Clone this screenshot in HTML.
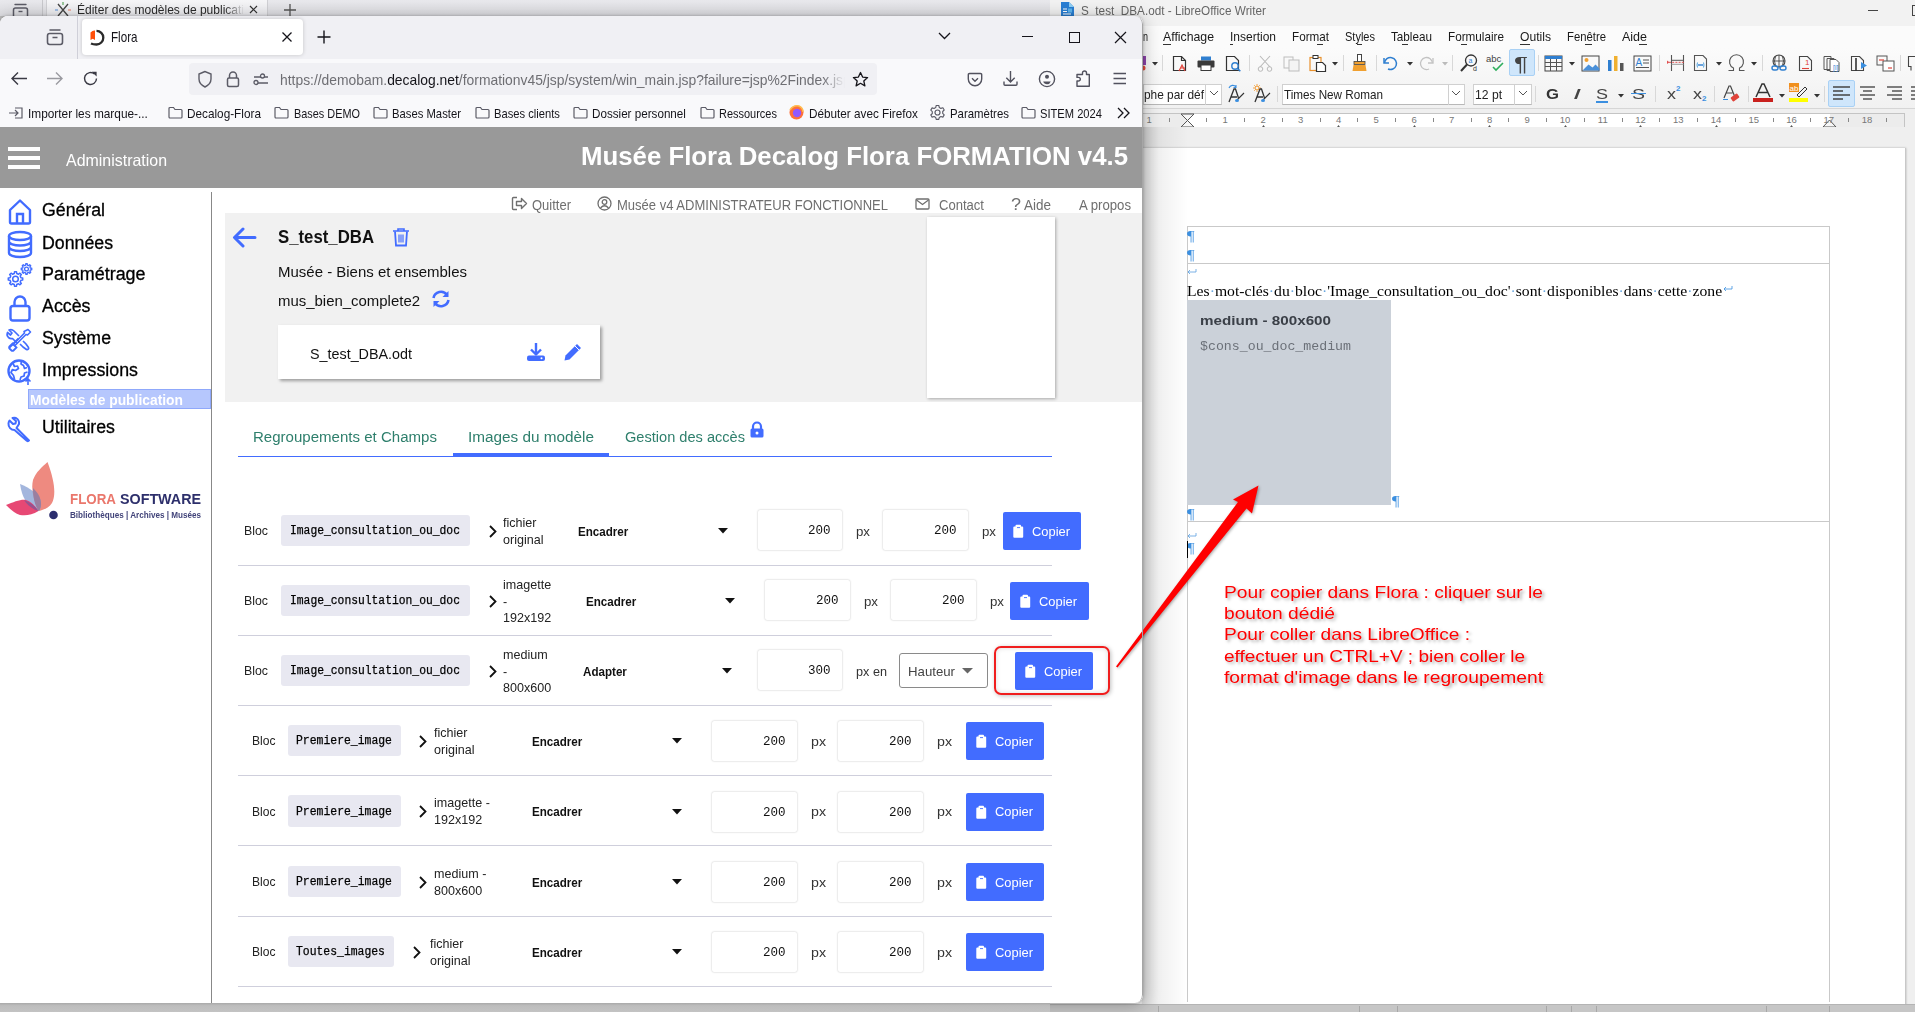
<!DOCTYPE html>
<html><head><meta charset="utf-8"><title>Flora</title>
<style>
*{box-sizing:border-box;margin:0;padding:0}
html,body{width:1915px;height:1012px;overflow:hidden;background:#c0c0c0;font-family:"Liberation Sans",sans-serif}
body{position:relative}
.a{position:absolute}
.t{position:absolute;white-space:nowrap}
svg.a{overflow:visible}
</style></head><body>
<div class="a" style="left:1050.0px;top:0.0px;width:865.0px;height:1012.0px;background:#eeeeee"></div>
<div class="a" style="left:1050.0px;top:0.0px;width:865.0px;height:26.0px;background:#f2f2f2"></div>
<svg class="a" style="left:1060.0px;top:2.0px;" width="14" height="15" viewBox="0 0 14 15" fill="none"><path d="M1 0h8l5 5v10H1z" fill="#2a7fd4"/><path d="M9 0v5h5z" fill="#8fd0f5"/><path d="M3 7h4M3 9.5h4M3 12h8" stroke="#fff" stroke-width="1.2"/><rect x="8" y="6.5" width="4" height="4" fill="#5fb6ee"/></svg>
<div class="t" style="left:1081.0px;top:4.33px;font-size:13.20px;line-height:13.20px;color:#666;font-weight:400;font-family:'Liberation Sans',sans-serif;transform:scaleX(0.8901);transform-origin:0 0;">S_test_DBA.odt - LibreOffice Writer</div>
<div class="a" style="left:1868.0px;top:10.0px;width:10.0px;height:1.0px;background:#444"></div>
<div class="a" style="left:1912.0px;top:5.0px;width:6.0px;height:11.0px;border:1px solid #444"></div>
<div class="a" style="left:1050.0px;top:26.0px;width:865.0px;height:22.0px;background:#fbfbfb"></div>
<div class="t" style="left:1143.0px;top:30.30px;font-size:13.00px;line-height:13.00px;color:#1a1a1a;font-weight:400;font-family:'Liberation Sans',sans-serif;transform:scaleX(0.6916);transform-origin:0 0;">n</div>
<div class="t" style="left:1163.0px;top:30.30px;font-size:13.00px;line-height:13.00px;color:#1a1a1a;font-weight:400;font-family:'Liberation Sans',sans-serif;transform:scaleX(0.9451);transform-origin:0 0;">Affichage</div>
<div class="t" style="left:1230.0px;top:30.30px;font-size:13.00px;line-height:13.00px;color:#1a1a1a;font-weight:400;font-family:'Liberation Sans',sans-serif;transform:scaleX(0.9226);transform-origin:0 0;">Insertion</div>
<div class="t" style="left:1292.0px;top:30.30px;font-size:13.00px;line-height:13.00px;color:#1a1a1a;font-weight:400;font-family:'Liberation Sans',sans-serif;transform:scaleX(0.8988);transform-origin:0 0;">Format</div>
<div class="t" style="left:1345.0px;top:30.30px;font-size:13.00px;line-height:13.00px;color:#1a1a1a;font-weight:400;font-family:'Liberation Sans',sans-serif;transform:scaleX(0.8474);transform-origin:0 0;">Styles</div>
<div class="t" style="left:1391.0px;top:30.30px;font-size:13.00px;line-height:13.00px;color:#1a1a1a;font-weight:400;font-family:'Liberation Sans',sans-serif;transform:scaleX(0.9004);transform-origin:0 0;">Tableau</div>
<div class="t" style="left:1448.0px;top:30.30px;font-size:13.00px;line-height:13.00px;color:#1a1a1a;font-weight:400;font-family:'Liberation Sans',sans-serif;transform:scaleX(0.9015);transform-origin:0 0;">Formulaire</div>
<div class="t" style="left:1520.0px;top:30.30px;font-size:13.00px;line-height:13.00px;color:#1a1a1a;font-weight:400;font-family:'Liberation Sans',sans-serif;transform:scaleX(0.9329);transform-origin:0 0;">Outils</div>
<div class="t" style="left:1567.0px;top:30.30px;font-size:13.00px;line-height:13.00px;color:#1a1a1a;font-weight:400;font-family:'Liberation Sans',sans-serif;transform:scaleX(0.8706);transform-origin:0 0;">Fenêtre</div>
<div class="t" style="left:1622.0px;top:30.30px;font-size:13.00px;line-height:13.00px;color:#1a1a1a;font-weight:400;font-family:'Liberation Sans',sans-serif;transform:scaleX(0.9609);transform-origin:0 0;">Aide</div>
<div class="a" style="left:1163.0px;top:43.5px;width:8.0px;height:1.0px;background:#333"></div>
<div class="a" style="left:1230.0px;top:43.5px;width:3.0px;height:1.0px;background:#333"></div>
<div class="a" style="left:1317.0px;top:43.5px;width:6.0px;height:1.0px;background:#333"></div>
<div class="a" style="left:1357.0px;top:43.5px;width:5.0px;height:1.0px;background:#333"></div>
<div class="a" style="left:1402.0px;top:43.5px;width:6.0px;height:1.0px;background:#333"></div>
<div class="a" style="left:1461.0px;top:43.5px;width:6.0px;height:1.0px;background:#333"></div>
<div class="a" style="left:1520.0px;top:43.5px;width:10.0px;height:1.0px;background:#333"></div>
<div class="a" style="left:1585.0px;top:43.5px;width:7.0px;height:1.0px;background:#333"></div>
<div class="a" style="left:1639.0px;top:43.5px;width:8.0px;height:1.0px;background:#333"></div>
<div class="a" style="left:1050.0px;top:48.0px;width:865.0px;height:61.0px;background:linear-gradient(#fbfbfb,#f1f1f1)"></div>
<div class="a" style="left:1050.0px;top:108.0px;width:865.0px;height:1.0px;background:#d6d6d6"></div>
<svg class="a" style="left:1140.0px;top:55.0px;" width="8" height="16" viewBox="0 0 8 16" fill="none"><rect x="0" y="1" width="6" height="9" fill="#8e44ad"/><circle cx="3" cy="13" r="2.5" fill="#e74c3c"/></svg>
<svg class="a" style="left:1152.0px;top:62.0px;" width="6" height="4" viewBox="0 0 6 4" fill="none"><path d="M0 0h6L3 3.5z" fill="#333"/></svg>
<div class="a" style="left:1162.0px;top:55.0px;width:1.0px;height:16.0px;background:#d8d8d8"></div>
<svg class="a" style="left:1172.0px;top:55.0px;" width="17" height="17" viewBox="0 0 17 17" fill="none"><path d="M1.5 1.5h8l4 4v10h-12z" stroke="#333" stroke-width="1.2"/><path d="M9.5 1.5v4h4" stroke="#333" stroke-width="1.2"/><path d="M7 16l3-6 3 6M8 13h5" stroke="#e0433a" stroke-width="1.2"/></svg>
<svg class="a" style="left:1197.0px;top:56.0px;" width="18" height="15" viewBox="0 0 18 15" fill="none"><rect x="4" y="0.5" width="10" height="4" fill="#2f7fd0"/><rect x="0.5" y="4.5" width="17" height="7" rx="1" fill="#3a3a3a"/><rect x="4" y="9" width="10" height="5.5" fill="#fff" stroke="#3a3a3a"/></svg>
<svg class="a" style="left:1225.0px;top:55.0px;" width="18" height="17" viewBox="0 0 18 17" fill="none"><path d="M1.5 1.5h8l4 4v10h-12z" stroke="#333" stroke-width="1.2"/><circle cx="10" cy="11" r="3.2" stroke="#2f7fd0" stroke-width="1.4"/><path d="M12.3 13.3l3 3" stroke="#2f7fd0" stroke-width="1.6"/></svg>
<div class="a" style="left:1249.0px;top:55.0px;width:1.0px;height:16.0px;background:#d8d8d8"></div>
<svg class="a" style="left:1257.0px;top:55.0px;" width="17" height="17" viewBox="0 0 17 17" fill="none"><path d="M3 1l10 11M13 1L3 12" stroke="#b9b9b9" stroke-width="1.1"/><circle cx="3.5" cy="14" r="2.3" stroke="#b9b9b9"/><circle cx="12.5" cy="14" r="2.3" stroke="#b9b9b9"/></svg>
<svg class="a" style="left:1283.0px;top:56.0px;" width="17" height="16" viewBox="0 0 17 16" fill="none"><rect x="1" y="1" width="9" height="11" stroke="#bdbdbd"/><rect x="6" y="4" width="10" height="11" fill="#f4f4f4" stroke="#bdbdbd"/></svg>
<svg class="a" style="left:1309.0px;top:55.0px;" width="18" height="17" viewBox="0 0 18 17" fill="none"><rect x="1" y="2.5" width="11" height="13" stroke="#e8912d" stroke-width="1.2"/><rect x="4" y="0.5" width="5" height="3" fill="#fff" stroke="#333"/><path d="M7.5 7.5h6l3 3v6h-9z" fill="#fff" stroke="#333" stroke-width="1.2"/></svg>
<svg class="a" style="left:1332.0px;top:62.0px;" width="6" height="4" viewBox="0 0 6 4" fill="none"><path d="M0 0h6L3 3.5z" fill="#333"/></svg>
<div class="a" style="left:1343.0px;top:55.0px;width:1.0px;height:16.0px;background:#d8d8d8"></div>
<svg class="a" style="left:1352.0px;top:54.0px;" width="15" height="18" viewBox="0 0 15 18" fill="none"><rect x="5.5" y="0.5" width="4" height="7" fill="#fff" stroke="#444"/><rect x="2" y="7.5" width="11" height="3" fill="#f0a030" stroke="#444" stroke-width="0.8"/><path d="M1.5 11h12l1 6H0.5z" fill="#f0a030"/></svg>
<div class="a" style="left:1376.0px;top:55.0px;width:1.0px;height:16.0px;background:#d8d8d8"></div>
<svg class="a" style="left:1382.0px;top:55.0px;" width="17" height="16" viewBox="0 0 17 16" fill="none"><path d="M2 3v5h5" stroke="#2f7fd0" stroke-width="1.5"/><path d="M2.5 8A6 6 0 1 1 6 14" stroke="#2f7fd0" stroke-width="1.5"/></svg>
<svg class="a" style="left:1407.0px;top:62.0px;" width="6" height="4" viewBox="0 0 6 4" fill="none"><path d="M0 0h6L3 3.5z" fill="#333"/></svg>
<svg class="a" style="left:1418.0px;top:55.0px;" width="17" height="16" viewBox="0 0 17 16" fill="none"><path d="M15 3v5h-5" stroke="#c3c3c3" stroke-width="1.3"/><path d="M14.5 8A6 6 0 1 0 11 14" stroke="#c3c3c3" stroke-width="1.3"/></svg>
<svg class="a" style="left:1442.0px;top:62.0px;" width="6" height="4" viewBox="0 0 6 4" fill="none"><path d="M0 0h6L3 3.5z" fill="#bbb"/></svg>
<div class="a" style="left:1452.0px;top:55.0px;width:1.0px;height:16.0px;background:#d8d8d8"></div>
<svg class="a" style="left:1460.0px;top:54.0px;" width="19" height="18" viewBox="0 0 19 18" fill="none"><circle cx="11" cy="6.5" r="5.5" stroke="#333" stroke-width="1.3"/><path d="M7 10.5L1 17" stroke="#333" stroke-width="2"/><text x="8.5" y="9" font-size="7" fill="#2f7fd0" font-family="Liberation Sans">a</text><text x="13" y="17" font-size="7" fill="#333" font-family="Liberation Sans">d</text></svg>
<svg class="a" style="left:1486.0px;top:54.0px;" width="20" height="18" viewBox="0 0 20 18" fill="none"><text x="0" y="8" font-size="9.5" fill="#444" font-family="Liberation Sans">abc</text><path d="M7 13l3 3 7-7" stroke="#2fae5e" stroke-width="1.6"/></svg>
<div class="a" style="left:1509.0px;top:49.0px;width:26.0px;height:27.0px;background:#cfe6fb;border:1px solid #a9d1f5;border-radius:2px"></div>
<div class="t" style="left:1514.0px;top:53.22px;font-size:21.00px;line-height:21.00px;color:#444;font-weight:400;font-family:'Liberation Sans',sans-serif;transform:scaleX(1.2410);transform-origin:0 0;">¶</div>
<div class="a" style="left:1538.0px;top:55.0px;width:1.0px;height:16.0px;background:#d8d8d8"></div>
<svg class="a" style="left:1544.0px;top:55.0px;" width="19" height="17" viewBox="0 0 19 17" fill="none"><rect x="1" y="1" width="17" height="15" stroke="#444"/><rect x="1" y="1" width="17" height="3" fill="#2f7fd0"/><path d="M1 7.5h17M1 11.5h17M6.5 4v12M12.5 4v12" stroke="#555"/></svg>
<svg class="a" style="left:1569.0px;top:62.0px;" width="6" height="4" viewBox="0 0 6 4" fill="none"><path d="M0 0h6L3 3.5z" fill="#333"/></svg>
<svg class="a" style="left:1581.0px;top:55.0px;" width="19" height="17" viewBox="0 0 19 17" fill="none"><rect x="1" y="1" width="17" height="15" stroke="#444"/><circle cx="5.5" cy="5" r="2" fill="#f0a030"/><path d="M1.5 15.5l6-6 4 3 3-3 4 4v2z" fill="#4a90d9"/></svg>
<svg class="a" style="left:1607.0px;top:55.0px;" width="18" height="17" viewBox="0 0 18 17" fill="none"><rect x="1" y="5" width="3.5" height="11" fill="#2f7fd0"/><rect x="7" y="1" width="3.5" height="15" fill="#f0b030"/><rect x="13" y="8" width="3.5" height="8" fill="#555"/></svg>
<svg class="a" style="left:1633.0px;top:55.0px;" width="19" height="17" viewBox="0 0 19 17" fill="none"><rect x="1" y="1" width="17" height="15" stroke="#444"/><text x="2.5" y="11" font-size="10" fill="#2f7fd0" font-family="Liberation Sans">A</text><path d="M10 5h6M10 8h6M3 12.5h13" stroke="#555"/></svg>
<div class="a" style="left:1659.0px;top:55.0px;width:1.0px;height:16.0px;background:#d8d8d8"></div>
<svg class="a" style="left:1666.0px;top:54.0px;" width="20" height="18" viewBox="0 0 20 18" fill="none"><path d="M5.5 1v16M17.5 1v16" stroke="#555" stroke-width="1.1"/><path d="M5.5 6.3h12" stroke="#555" stroke-width="1"/><path d="M5.5 10.3h12" stroke="#999" stroke-width="1"/><path d="M3 8.3h15" stroke="#e05050" stroke-width="1" stroke-dasharray="2 1.2"/><path d="M1 6.5l2.5 1.8L1 10z" fill="#e05050"/></svg>
<svg class="a" style="left:1693.0px;top:54.0px;" width="16" height="18" viewBox="0 0 16 18" fill="none"><path d="M1.5 1.5h8.5l3.5 3.5v11.5h-12z" stroke="#555" stroke-width="1.1"/><path d="M4.5 8.5q-1 2.5 0 5M10.5 8.5q1 2.5 0 5" stroke="#55a5e0" stroke-width="1"/><path d="M5 11h5" stroke="#2f7fd0" stroke-width="1.4"/></svg>
<svg class="a" style="left:1716.0px;top:62.0px;" width="6" height="4" viewBox="0 0 6 4" fill="none"><path d="M0 0h6L3 3.5z" fill="#333"/></svg>
<svg class="a" style="left:1727.0px;top:54.0px;" width="19" height="18" viewBox="0 0 19 18" fill="none"><path d="M1.5 16.5h5v-2.5A7 7 0 1 1 12.5 14v2.5h5" stroke="#555" stroke-width="1.1"/></svg>
<svg class="a" style="left:1751.0px;top:62.0px;" width="6" height="4" viewBox="0 0 6 4" fill="none"><path d="M0 0h6L3 3.5z" fill="#333"/></svg>
<div class="a" style="left:1762.0px;top:55.0px;width:1.0px;height:16.0px;background:#d8d8d8"></div>
<svg class="a" style="left:1770.0px;top:54.0px;" width="19" height="18" viewBox="0 0 19 18" fill="none"><circle cx="9" cy="7" r="6" stroke="#444" stroke-width="1.1"/><path d="M3 7h12M9 1v12M5.5 2.5q-2 4.5 0 9M12.5 2.5q2 4.5 0 9" stroke="#444" stroke-width="0.9"/><rect x="2" y="12" width="6" height="4" rx="2" stroke="#2f7fd0" stroke-width="1.4"/><rect x="10" y="12" width="6" height="4" rx="2" stroke="#2f7fd0" stroke-width="1.4"/></svg>
<svg class="a" style="left:1798.0px;top:55.0px;" width="15" height="17" viewBox="0 0 15 17" fill="none"><path d="M1.5 1.5h8l4 4v10h-12z" stroke="#444" stroke-width="1.1"/><path d="M4 13.5h7" stroke="#e0433a" stroke-width="1.1"/><text x="7" y="10" font-size="8" fill="#e0433a" font-family="Liberation Sans">1</text></svg>
<svg class="a" style="left:1823.0px;top:55.0px;" width="18" height="17" viewBox="0 0 18 17" fill="none"><path d="M1 1.5h7v13H1zM4 3.5h7v12H4z" stroke="#555"/><path d="M7 4.5h6l3 3v9H7z" fill="#fff" stroke="#555"/><text x="10" y="15" font-size="7" fill="#2f7fd0" font-family="Liberation Sans">[i]</text></svg>
<svg class="a" style="left:1850.0px;top:55.0px;" width="19" height="17" viewBox="0 0 19 17" fill="none"><path d="M1.5 1.5h8l4 4v10h-12z" stroke="#444" stroke-width="1.1"/><path d="M6 3v13" stroke="#333" stroke-width="1.6"/><path d="M11 7v7l6-3.5z" fill="#3b8fe0"/></svg>
<svg class="a" style="left:1876.0px;top:55.0px;" width="19" height="17" viewBox="0 0 19 17" fill="none"><rect x="1" y="1" width="10" height="9" stroke="#555"/><rect x="7" y="6" width="11" height="10" fill="#fff" stroke="#555"/><path d="M3 5h5" stroke="#e0433a" stroke-width="1.2"/><path d="M12 13h4" stroke="#e0433a" stroke-width="1.2"/></svg>
<div class="a" style="left:1900.0px;top:55.0px;width:1.0px;height:16.0px;background:#d8d8d8"></div>
<svg class="a" style="left:1907.0px;top:55.0px;" width="8" height="17" viewBox="0 0 8 17" fill="none"><path d="M8 1.5H1.5v10H4v4" stroke="#444" stroke-width="1.1"/></svg>
<div class="a" style="left:1143.0px;top:84.0px;width:79.0px;height:21.0px;background:#fff;border:1px solid #d0d0d0;border-bottom-color:#b8b8b8"></div>
<div class="a" style="left:1205.0px;top:84.0px;width:1.0px;height:21.0px;background:#d0d0d0"></div>
<div class="t" style="left:1144.0px;top:87.50px;font-size:13.00px;line-height:13.00px;color:#222;font-weight:400;font-family:'Liberation Sans',sans-serif;transform:scaleX(0.9123);transform-origin:0 0;">phe par déf</div>
<svg class="a" style="left:1209.0px;top:90.0px;" width="10" height="6" viewBox="0 0 10 6" fill="none"><path d="M1 1l4 4 4-4" stroke="#555" stroke-width="1"/></svg>
<svg class="a" style="left:1226.0px;top:84.0px;" width="21" height="20" viewBox="0 0 21 20" fill="none"><path d="M3 4a4 4 0 0 1 7-1M10 1v2.5H7.5" stroke="#3b8fe0" stroke-width="1.1"/><path d="M3 18l5-13h1.5l3 9M5 13h6" stroke="#333" stroke-width="1.3"/><path d="M11 16l7-7" stroke="#333" stroke-width="1.1"/><ellipse cx="11" cy="16.5" rx="2" ry="1.5" fill="#3b8fe0"/></svg>
<svg class="a" style="left:1252.0px;top:84.0px;" width="21" height="20" viewBox="0 0 21 20" fill="none"><circle cx="5" cy="4" r="2" stroke="#f0901e" stroke-width="1"/><path d="M5 0v1.3M5 6.7V8M1 4h1.3M7.7 4H9M2.2 1.2l1 1M6.8 5.8l1 1M2.2 6.8l1-1M6.8 2.2l1-1" stroke="#f0901e" stroke-width="0.8"/><path d="M3 18l5-13h1.5l3 9M5 13h6" stroke="#333" stroke-width="1.3"/><path d="M11 16l7-7" stroke="#333" stroke-width="1.1"/><ellipse cx="11" cy="16.5" rx="2" ry="1.5" fill="#3b8fe0"/></svg>
<div class="a" style="left:1277.0px;top:86.0px;width:1.0px;height:16.0px;background:#d8d8d8"></div>
<div class="a" style="left:1282.0px;top:84.0px;width:183.0px;height:21.0px;background:#fff;border:1px solid #d0d0d0;border-bottom-color:#b8b8b8"></div>
<div class="a" style="left:1448.0px;top:84.0px;width:1.0px;height:21.0px;background:#d0d0d0"></div>
<div class="t" style="left:1284.0px;top:87.50px;font-size:13.00px;line-height:13.00px;color:#222;font-weight:400;font-family:'Liberation Sans',sans-serif;transform:scaleX(0.8997);transform-origin:0 0;">Times New Roman</div>
<svg class="a" style="left:1451.0px;top:90.0px;" width="10" height="6" viewBox="0 0 10 6" fill="none"><path d="M1 1l4 4 4-4" stroke="#555" stroke-width="1"/></svg>
<div class="a" style="left:1473.0px;top:84.0px;width:59.0px;height:21.0px;background:#fff;border:1px solid #d0d0d0;border-bottom-color:#b8b8b8"></div>
<div class="a" style="left:1514.0px;top:84.0px;width:1.0px;height:21.0px;background:#d0d0d0"></div>
<div class="t" style="left:1475.0px;top:87.50px;font-size:13.00px;line-height:13.00px;color:#222;font-weight:400;font-family:'Liberation Sans',sans-serif;transform:scaleX(0.9339);transform-origin:0 0;">12 pt</div>
<svg class="a" style="left:1518.0px;top:90.0px;" width="10" height="6" viewBox="0 0 10 6" fill="none"><path d="M1 1l4 4 4-4" stroke="#555" stroke-width="1"/></svg>
<div class="a" style="left:1535.0px;top:86.0px;width:1.0px;height:16.0px;background:#d8d8d8"></div>
<div class="t" style="left:1546.0px;top:86.30px;font-size:15.00px;line-height:15.00px;color:#333;font-weight:700;font-family:'Liberation Sans',sans-serif;transform:scaleX(1.1142);transform-origin:0 0;">G</div>
<div class="t" style="left:1573.0px;top:86.30px;font-size:15.00px;line-height:15.00px;color:#444;font-weight:400;font-family:'Liberation Sans',sans-serif;transform:scaleX(1.9198);transform-origin:0 0;font-style:italic;">I</div>
<div class="t" style="left:1596.0px;top:86.30px;font-size:15.00px;line-height:15.00px;color:#444;font-weight:400;font-family:'Liberation Sans',sans-serif;transform:scaleX(1.1993);transform-origin:0 0;">S</div>
<div class="a" style="left:1596.0px;top:101.0px;width:12.0px;height:1.5px;background:#3b8fe0"></div>
<svg class="a" style="left:1618.0px;top:94.0px;" width="6" height="4" viewBox="0 0 6 4" fill="none"><path d="M0 0h6L3 3.5z" fill="#333"/></svg>
<div class="t" style="left:1632.0px;top:86.30px;font-size:15.00px;line-height:15.00px;color:#444;font-weight:400;font-family:'Liberation Sans',sans-serif;transform:scaleX(1.2993);transform-origin:0 0;">S</div>
<div class="a" style="left:1631.0px;top:93.0px;width:15.0px;height:1.2px;background:#3b8fe0"></div>
<div class="a" style="left:1655.0px;top:86.0px;width:1.0px;height:16.0px;background:#d8d8d8"></div>
<div class="t" style="left:1667.0px;top:87.15px;font-size:14.00px;line-height:14.00px;color:#444;font-weight:400;font-family:'Liberation Sans',sans-serif;transform:scaleX(1.2857);transform-origin:0 0;">x</div>
<div class="t" style="left:1676.0px;top:85.23px;font-size:8.00px;line-height:8.00px;color:#3b8fe0;font-weight:700;font-family:'Liberation Sans',sans-serif;">2</div>
<div class="t" style="left:1693.0px;top:87.15px;font-size:14.00px;line-height:14.00px;color:#444;font-weight:400;font-family:'Liberation Sans',sans-serif;transform:scaleX(1.2857);transform-origin:0 0;">x</div>
<div class="t" style="left:1702.0px;top:95.23px;font-size:8.00px;line-height:8.00px;color:#3b8fe0;font-weight:700;font-family:'Liberation Sans',sans-serif;">2</div>
<div class="a" style="left:1714.0px;top:86.0px;width:1.0px;height:16.0px;background:#d8d8d8"></div>
<svg class="a" style="left:1723.0px;top:84.0px;" width="17" height="18" viewBox="0 0 17 18" fill="none"><path d="M1 14l5-12h1.5l4 10M3.5 9h6" stroke="#444" stroke-width="1.2"/><path d="M0 15.5h5" stroke="#3b8fe0"/><rect x="8" y="11" width="8" height="5" rx="1" transform="rotate(-35 12 13.5)" fill="#e0433a"/></svg>
<div class="a" style="left:1748.0px;top:86.0px;width:1.0px;height:16.0px;background:#d8d8d8"></div>
<svg class="a" style="left:1753.0px;top:83.0px;" width="20" height="20" viewBox="0 0 20 20" fill="none"><path d="M3 14L9 1h2l6 13M5.5 9.5h9" stroke="#333" stroke-width="1.5"/><rect x="0" y="15" width="20" height="4" fill="#c9211e"/></svg>
<svg class="a" style="left:1779.0px;top:94.0px;" width="6" height="4" viewBox="0 0 6 4" fill="none"><path d="M0 0h6L3 3.5z" fill="#333"/></svg>
<svg class="a" style="left:1789.0px;top:83.0px;" width="20" height="20" viewBox="0 0 20 20" fill="none"><rect x="0" y="0" width="10" height="9" fill="#f0901e"/><text x="0.5" y="8" font-size="8" fill="#fff" font-family="Liberation Sans">ab</text><path d="M8 12l8-8 2 2-8 8z" stroke="#333" stroke-width="1"/><rect x="0" y="15" width="19" height="4" fill="#ffff00"/></svg>
<svg class="a" style="left:1814.0px;top:94.0px;" width="6" height="4" viewBox="0 0 6 4" fill="none"><path d="M0 0h6L3 3.5z" fill="#333"/></svg>
<div class="a" style="left:1824.0px;top:86.0px;width:1.0px;height:16.0px;background:#d8d8d8"></div>
<div class="a" style="left:1828.0px;top:80.0px;width:27.0px;height:27.0px;background:#cfe6fb;border:1px solid #a9d1f5;border-radius:2px"></div>
<svg class="a" style="left:1832.0px;top:86.0px;" width="19" height="15" viewBox="0 0 19 15" fill="none"><path d="M1 1h17M1 5h10M1 9h17M1 13h10" stroke="#444" stroke-width="1.4"/></svg>
<svg class="a" style="left:1859.0px;top:86.0px;" width="17" height="15" viewBox="0 0 17 15" fill="none"><path d="M1 1h15M4 5h9M1 9h15M4 13h9" stroke="#555" stroke-width="1.4"/></svg>
<svg class="a" style="left:1886.0px;top:86.0px;" width="17" height="15" viewBox="0 0 17 15" fill="none"><path d="M1 1h15M6 5h10M1 9h15M6 13h10" stroke="#555" stroke-width="1.4"/></svg>
<svg class="a" style="left:1911.0px;top:86.0px;" width="4" height="15" viewBox="0 0 4 15" fill="none"><path d="M0 1h4M0 5h4M0 9h4M0 13h4" stroke="#555" stroke-width="1.4"/></svg>
<div class="a" style="left:1050.0px;top:109.0px;width:865.0px;height:18.0px;background:#efefef"></div>
<div class="a" style="left:1143.0px;top:113.0px;width:762.0px;height:15.0px;background:#fff;border:1px solid #c4c4c4"></div>
<div class="a" style="left:1143.0px;top:113.0px;width:44.0px;height:15.0px;background:#ececec;border-top:1px solid #c4c4c4;border-bottom:1px solid #c4c4c4"></div>
<div class="a" style="left:1830.0px;top:113.0px;width:75.0px;height:15.0px;background:#ececec;border:1px solid #c4c4c4;border-left:none"></div>
<div class="t" style="left:1222.6px;top:115.46px;font-size:9.50px;line-height:9.50px;color:#777;font-weight:400;font-family:'Liberation Sans',sans-serif;">1</div>
<div class="t" style="left:1260.4px;top:115.46px;font-size:9.50px;line-height:9.50px;color:#777;font-weight:400;font-family:'Liberation Sans',sans-serif;">2</div>
<div class="t" style="left:1298.1px;top:115.46px;font-size:9.50px;line-height:9.50px;color:#777;font-weight:400;font-family:'Liberation Sans',sans-serif;">3</div>
<div class="t" style="left:1335.9px;top:115.46px;font-size:9.50px;line-height:9.50px;color:#777;font-weight:400;font-family:'Liberation Sans',sans-serif;">4</div>
<div class="t" style="left:1373.6px;top:115.46px;font-size:9.50px;line-height:9.50px;color:#777;font-weight:400;font-family:'Liberation Sans',sans-serif;">5</div>
<div class="t" style="left:1411.4px;top:115.46px;font-size:9.50px;line-height:9.50px;color:#777;font-weight:400;font-family:'Liberation Sans',sans-serif;">6</div>
<div class="t" style="left:1449.1px;top:115.46px;font-size:9.50px;line-height:9.50px;color:#777;font-weight:400;font-family:'Liberation Sans',sans-serif;">7</div>
<div class="t" style="left:1486.9px;top:115.46px;font-size:9.50px;line-height:9.50px;color:#777;font-weight:400;font-family:'Liberation Sans',sans-serif;">8</div>
<div class="t" style="left:1524.6px;top:115.46px;font-size:9.50px;line-height:9.50px;color:#777;font-weight:400;font-family:'Liberation Sans',sans-serif;">9</div>
<div class="t" style="left:1559.7px;top:115.46px;font-size:9.50px;line-height:9.50px;color:#777;font-weight:400;font-family:'Liberation Sans',sans-serif;">10</div>
<div class="t" style="left:1597.8px;top:115.46px;font-size:9.50px;line-height:9.50px;color:#777;font-weight:400;font-family:'Liberation Sans',sans-serif;">11</div>
<div class="t" style="left:1635.2px;top:115.46px;font-size:9.50px;line-height:9.50px;color:#777;font-weight:400;font-family:'Liberation Sans',sans-serif;">12</div>
<div class="t" style="left:1673.0px;top:115.46px;font-size:9.50px;line-height:9.50px;color:#777;font-weight:400;font-family:'Liberation Sans',sans-serif;">13</div>
<div class="t" style="left:1710.7px;top:115.46px;font-size:9.50px;line-height:9.50px;color:#777;font-weight:400;font-family:'Liberation Sans',sans-serif;">14</div>
<div class="t" style="left:1748.5px;top:115.46px;font-size:9.50px;line-height:9.50px;color:#777;font-weight:400;font-family:'Liberation Sans',sans-serif;">15</div>
<div class="t" style="left:1786.2px;top:115.46px;font-size:9.50px;line-height:9.50px;color:#777;font-weight:400;font-family:'Liberation Sans',sans-serif;">16</div>
<div class="t" style="left:1861.7px;top:115.46px;font-size:9.50px;line-height:9.50px;color:#777;font-weight:400;font-family:'Liberation Sans',sans-serif;">18</div>
<div class="t" style="left:1146.5px;top:115.46px;font-size:9.50px;line-height:9.50px;color:#777;font-weight:400;font-family:'Liberation Sans',sans-serif;">1</div>
<div class="a" style="left:1168.6px;top:118.0px;width:1.0px;height:4.0px;background:#888"></div>
<div class="a" style="left:1206.4px;top:118.0px;width:1.0px;height:4.0px;background:#888"></div>
<div class="a" style="left:1244.1px;top:118.0px;width:1.0px;height:4.0px;background:#888"></div>
<div class="a" style="left:1281.9px;top:118.0px;width:1.0px;height:4.0px;background:#888"></div>
<div class="a" style="left:1319.6px;top:118.0px;width:1.0px;height:4.0px;background:#888"></div>
<div class="a" style="left:1357.4px;top:118.0px;width:1.0px;height:4.0px;background:#888"></div>
<div class="a" style="left:1395.1px;top:118.0px;width:1.0px;height:4.0px;background:#888"></div>
<div class="a" style="left:1432.9px;top:118.0px;width:1.0px;height:4.0px;background:#888"></div>
<div class="a" style="left:1470.6px;top:118.0px;width:1.0px;height:4.0px;background:#888"></div>
<div class="a" style="left:1508.4px;top:118.0px;width:1.0px;height:4.0px;background:#888"></div>
<div class="a" style="left:1546.1px;top:118.0px;width:1.0px;height:4.0px;background:#888"></div>
<div class="a" style="left:1583.9px;top:118.0px;width:1.0px;height:4.0px;background:#888"></div>
<div class="a" style="left:1621.6px;top:118.0px;width:1.0px;height:4.0px;background:#888"></div>
<div class="a" style="left:1659.4px;top:118.0px;width:1.0px;height:4.0px;background:#888"></div>
<div class="a" style="left:1697.1px;top:118.0px;width:1.0px;height:4.0px;background:#888"></div>
<div class="a" style="left:1734.9px;top:118.0px;width:1.0px;height:4.0px;background:#888"></div>
<div class="a" style="left:1772.6px;top:118.0px;width:1.0px;height:4.0px;background:#888"></div>
<div class="a" style="left:1810.4px;top:118.0px;width:1.0px;height:4.0px;background:#888"></div>
<div class="a" style="left:1848.1px;top:118.0px;width:1.0px;height:4.0px;background:#888"></div>
<div class="a" style="left:1885.9px;top:118.0px;width:1.0px;height:4.0px;background:#888"></div>
<svg class="a" style="left:1260.5px;top:124.5px;" width="5" height="3.5" viewBox="0 0 5 3.5" fill="none"><path d="M0 3.5L2.5 0 5 3.5z" fill="#555"/></svg>
<svg class="a" style="left:1336.0px;top:124.5px;" width="5" height="3.5" viewBox="0 0 5 3.5" fill="none"><path d="M0 3.5L2.5 0 5 3.5z" fill="#555"/></svg>
<svg class="a" style="left:1411.5px;top:124.5px;" width="5" height="3.5" viewBox="0 0 5 3.5" fill="none"><path d="M0 3.5L2.5 0 5 3.5z" fill="#555"/></svg>
<svg class="a" style="left:1487.0px;top:124.5px;" width="5" height="3.5" viewBox="0 0 5 3.5" fill="none"><path d="M0 3.5L2.5 0 5 3.5z" fill="#555"/></svg>
<svg class="a" style="left:1562.5px;top:124.5px;" width="5" height="3.5" viewBox="0 0 5 3.5" fill="none"><path d="M0 3.5L2.5 0 5 3.5z" fill="#555"/></svg>
<svg class="a" style="left:1638.0px;top:124.5px;" width="5" height="3.5" viewBox="0 0 5 3.5" fill="none"><path d="M0 3.5L2.5 0 5 3.5z" fill="#555"/></svg>
<svg class="a" style="left:1713.5px;top:124.5px;" width="5" height="3.5" viewBox="0 0 5 3.5" fill="none"><path d="M0 3.5L2.5 0 5 3.5z" fill="#555"/></svg>
<svg class="a" style="left:1789.0px;top:124.5px;" width="5" height="3.5" viewBox="0 0 5 3.5" fill="none"><path d="M0 3.5L2.5 0 5 3.5z" fill="#555"/></svg>
<svg class="a" style="left:1180.0px;top:113.0px;" width="15" height="15" viewBox="0 0 15 15" fill="none"><path d="M1 1h13L7.5 7.5zM1 14h13L7.5 7.5z" fill="#f6f6f6" stroke="#555"/></svg>
<svg class="a" style="left:1822.0px;top:114.0px;" width="15" height="14" viewBox="0 0 15 14" fill="none"><path d="M7.5 6L1 13h13z" fill="#f6f6f6" stroke="#555"/></svg>
<div class="t" style="left:1823.5px;top:115.46px;font-size:9.50px;line-height:9.50px;color:#777;font-weight:400;font-family:'Liberation Sans',sans-serif;">17</div>
<div class="a" style="left:1050.0px;top:127.0px;width:865.0px;height:876.0px;background:#efefef"></div>
<div class="a" style="left:1143.0px;top:148.0px;width:763.0px;height:860.0px;background:#fff;box-shadow:0 0 2px #aaa"></div>
<div class="a" style="left:1905.0px;top:148.0px;width:1.0px;height:860.0px;background:#c8c8c8"></div>
<div class="a" style="left:1187.0px;top:226.0px;width:643.0px;height:38.0px;border:1px solid #c9c9c9;border-bottom:none"></div>
<div class="a" style="left:1187.0px;top:263.0px;width:643.0px;height:1.0px;background:#c9c9c9"></div>
<div class="a" style="left:1187.0px;top:264.0px;width:1.0px;height:258.0px;background:#c9c9c9"></div>
<div class="a" style="left:1829.0px;top:264.0px;width:1.0px;height:258.0px;background:#c9c9c9"></div>
<div class="a" style="left:1187.0px;top:521.0px;width:643.0px;height:1.0px;background:#c9c9c9"></div>
<div class="a" style="left:1187.0px;top:522.0px;width:1.0px;height:480.0px;background:#c9c9c9"></div>
<div class="a" style="left:1829.0px;top:522.0px;width:1.0px;height:480.0px;background:#c9c9c9"></div>
<div class="t" style="left:1186.5px;top:228.02px;font-size:15.50px;line-height:15.50px;color:#3b8fe0;font-weight:400;font-family:'Liberation Serif',serif;transform:scaleX(1.0679);transform-origin:0 0;">¶</div>
<div class="t" style="left:1186.5px;top:247.02px;font-size:15.50px;line-height:15.50px;color:#3b8fe0;font-weight:400;font-family:'Liberation Serif',serif;transform:scaleX(1.0679);transform-origin:0 0;">¶</div>
<div class="t" style="left:1186.5px;top:506.02px;font-size:15.50px;line-height:15.50px;color:#3b8fe0;font-weight:400;font-family:'Liberation Serif',serif;transform:scaleX(1.0679);transform-origin:0 0;">¶</div>
<div class="t" style="left:1186.5px;top:540.02px;font-size:15.50px;line-height:15.50px;color:#3b8fe0;font-weight:400;font-family:'Liberation Serif',serif;transform:scaleX(1.0679);transform-origin:0 0;">¶</div>
<svg class="a" style="left:1187.0px;top:269.0px;" width="10" height="6" viewBox="0 0 10 6" fill="none"><path d="M9 0v3H1M3 1L1 3l2 2" stroke="#5aa0e0" stroke-width="0.8"/></svg>
<svg class="a" style="left:1187.0px;top:533.0px;" width="10" height="6" viewBox="0 0 10 6" fill="none"><path d="M9 0v3H1M3 1L1 3l2 2" stroke="#5aa0e0" stroke-width="0.8"/></svg>
<div class="t" style="left:1187px;top:283.02px;font-size:15.5px;line-height:15.5px;color:#000;font-family:'Liberation Serif',serif;transform:scaleX(1.0114);transform-origin:0 0">Les<span style="color:#6aa8e0">·</span>mot-clés<span style="color:#6aa8e0">·</span>du<span style="color:#6aa8e0">·</span>bloc<span style="color:#6aa8e0">·</span>&#x27;Image_consultation_ou_doc&#x27;<span style="color:#6aa8e0">·</span>sont<span style="color:#6aa8e0">·</span>disponibles<span style="color:#6aa8e0">·</span>dans<span style="color:#6aa8e0">·</span>cette<span style="color:#6aa8e0">·</span>zone</div>
<svg class="a" style="left:1723.0px;top:286.0px;" width="10" height="6" viewBox="0 0 10 6" fill="none"><path d="M9 0v3H1M3 1L1 3l2 2" stroke="#3b8fe0" stroke-width="0.8"/></svg>
<div class="a" style="left:1187.0px;top:300.0px;width:204.0px;height:205.0px;background:#cbd1d9"></div>
<div class="t" style="left:1200.0px;top:313.57px;font-size:13.50px;line-height:13.50px;color:#3a3f47;font-weight:700;font-family:'Liberation Sans',sans-serif;transform:scaleX(1.1264);transform-origin:0 0;">medium - 800x600</div>
<div class="t" style="left:1200.0px;top:340.81px;font-size:12.00px;line-height:12.00px;color:#6b7078;font-weight:400;font-family:'Liberation Mono',monospace;transform:scaleX(1.1035);transform-origin:0 0;">$cons_ou_doc_medium</div>
<div class="t" style="left:1391.5px;top:493.02px;font-size:15.50px;line-height:15.50px;color:#3b8fe0;font-weight:400;font-family:'Liberation Serif',serif;transform:scaleX(1.0679);transform-origin:0 0;">¶</div>
<div class="a" style="left:1187.0px;top:541.0px;width:1.0px;height:17.0px;background:#000"></div>
<div class="t" style="left:1224.0px;top:583.61px;font-size:17.00px;line-height:17.00px;color:#ff0000;font-weight:400;font-family:'Liberation Sans',sans-serif;transform:scaleX(1.1292);transform-origin:0 0;text-shadow:2px 2px 3px rgba(0,0,0,.35);">Pour copier dans Flora : cliquer sur le</div>
<div class="t" style="left:1224.0px;top:604.61px;font-size:17.00px;line-height:17.00px;color:#ff0000;font-weight:400;font-family:'Liberation Sans',sans-serif;transform:scaleX(1.1291);transform-origin:0 0;text-shadow:2px 2px 3px rgba(0,0,0,.35);">bouton dédié</div>
<div class="t" style="left:1224.0px;top:625.61px;font-size:17.00px;line-height:17.00px;color:#ff0000;font-weight:400;font-family:'Liberation Sans',sans-serif;transform:scaleX(1.1238);transform-origin:0 0;text-shadow:2px 2px 3px rgba(0,0,0,.35);">Pour coller dans LibreOffice :</div>
<div class="t" style="left:1224.0px;top:647.61px;font-size:17.00px;line-height:17.00px;color:#ff0000;font-weight:400;font-family:'Liberation Sans',sans-serif;transform:scaleX(1.1171);transform-origin:0 0;text-shadow:2px 2px 3px rgba(0,0,0,.35);">effectuer un CTRL+V ; bien coller le</div>
<div class="t" style="left:1224.0px;top:668.61px;font-size:17.00px;line-height:17.00px;color:#ff0000;font-weight:400;font-family:'Liberation Sans',sans-serif;transform:scaleX(1.1313);transform-origin:0 0;text-shadow:2px 2px 3px rgba(0,0,0,.35);">format d&#x27;image dans le regroupement</div>
<div class="a" style="left:1050.0px;top:1004.0px;width:865.0px;height:8.0px;background:#c6c6c6;border-top:1px solid #b4b4b4"></div>
<div class="a" style="left:1158.0px;top:1006.0px;width:1.0px;height:6.0px;background:#a8a8a8"></div>
<div class="a" style="left:1359.0px;top:1006.0px;width:1.0px;height:6.0px;background:#a8a8a8"></div>
<div class="a" style="left:1397.0px;top:1006.0px;width:1.0px;height:6.0px;background:#a8a8a8"></div>
<div class="a" style="left:1546.0px;top:1006.0px;width:1.0px;height:6.0px;background:#a8a8a8"></div>
<div class="a" style="left:1571.0px;top:1006.0px;width:1.0px;height:6.0px;background:#a8a8a8"></div>
<div class="a" style="left:1596.0px;top:1006.0px;width:1.0px;height:6.0px;background:#a8a8a8"></div>
<div class="a" style="left:1766.0px;top:1006.0px;width:1.0px;height:6.0px;background:#a8a8a8"></div>
<div class="a" style="left:1829.0px;top:1006.0px;width:1.0px;height:6.0px;background:#a8a8a8"></div>
<div class="a" style="left:1143.0px;top:127.0px;width:45.0px;height:877.0px;background:linear-gradient(90deg,rgba(0,0,0,.15),rgba(0,0,0,.06) 35%,rgba(0,0,0,0))"></div>
<div class="a" style="left:0.0px;top:0.0px;width:1050.0px;height:16.0px;background:linear-gradient(#e9e9ed,#dedee2)"></div>
<svg class="a" style="left:12.0px;top:3.0px;" width="17" height="14" viewBox="0 0 17 14" fill="none"><path d="M3 1.5h11" stroke="#5b5b66" stroke-width="1.4" stroke-linecap="round"/><rect x="1.5" y="5" width="14" height="10" rx="2" stroke="#5b5b66" stroke-width="1.5"/><path d="M6.5 8.5h4" stroke="#5b5b66" stroke-width="1.4"/></svg>
<div class="a" style="left:42.0px;top:0.0px;width:1.0px;height:16.0px;background:#c8c8cc"></div>
<div class="a" style="left:46.0px;top:0.0px;width:222.0px;height:16.0px;background:linear-gradient(#f6f6f8,#ececf0);border-left:1px solid #d0d0d4;border-right:1px solid #d0d0d4"></div>
<svg class="a" style="left:55.0px;top:2.0px;" width="16" height="14" viewBox="0 0 16 14" fill="none"><path d="M3 2l10 12M13 2L3 14" stroke="#444" stroke-width="1.3"/><path d="M8 0v3" stroke="#7cb87c" stroke-width="1.5"/><path d="M0 8h3" stroke="#8db0e0" stroke-width="1.5"/><path d="M13 8h3" stroke="#f0a090" stroke-width="1.5"/></svg>
<div class="t" style="left:77.0px;top:2.57px;font-size:13.50px;line-height:13.50px;color:#2b2b2b;font-weight:400;font-family:'Liberation Sans',sans-serif;transform:scaleX(0.8902);transform-origin:0 0;-webkit-mask-image:linear-gradient(90deg,#000 88%,transparent);">Éditer des modèles de publicati</div>
<svg class="a" style="left:249.0px;top:5.0px;" width="9" height="9" viewBox="0 0 9 9" fill="none"><path d="M1 1l7 7M8 1L1 8" stroke="#333" stroke-width="1.2"/></svg>
<svg class="a" style="left:284.0px;top:4.0px;" width="12" height="12" viewBox="0 0 12 12" fill="none"><path d="M6 0v12M0 6h12" stroke="#555" stroke-width="1.3"/></svg>
<div class="a" style="left:0.0px;top:16.0px;width:1143.0px;height:987.0px;border-radius:8px 8px 8px 0;box-shadow:0 2px 18px rgba(0,0,0,.28),0 0 3px rgba(0,0,0,.25)"></div>
<div class="a" style="left:0;top:16px;width:1143px;height:987px;border-radius:8px 8px 8px 0;overflow:hidden;background:#fff">
<div class="a" style="left:0;top:-16px;width:1143px;height:1003px">
<div id="ffb" class="a" style="left:0;top:16px;width:1143px;height:987px;z-index:50;border-right:1px solid #a6a6a6;border-radius:8px 8px 8px 0;pointer-events:none"></div>
<div class="a" style="left:0.0px;top:16.0px;width:1143.0px;height:43.0px;background:#f0f0f4"></div>
<svg class="a" style="left:46.0px;top:28.0px;" width="18" height="17" viewBox="0 0 18 17" fill="none"><path d="M4 2h10" stroke="#5b5b66" stroke-width="1.5" stroke-linecap="round"/><rect x="1.5" y="5.5" width="15" height="11" rx="2.2" stroke="#5b5b66" stroke-width="1.6"/><path d="M6.5 9.5h5" stroke="#5b5b66" stroke-width="1.5"/></svg>
<div class="a" style="left:77.0px;top:16.0px;width:1.0px;height:43.0px;background:#cfcfd8"></div>
<div class="a" style="left:82.0px;top:19.0px;width:221.0px;height:36.0px;background:#fff;border-radius:4px;box-shadow:0 0 4px rgba(0,0,0,.18)"></div>
<svg class="a" style="left:89.0px;top:29.0px;" width="18" height="17" viewBox="0 0 18 17" fill="none"><path d="M2 14.5q2 1 5.5 1a6.8 6.8 0 0 0 0-13.6" stroke="#2b2b2b" stroke-width="2.3"/><path d="M1.5 3.5q2.5-2.5 4.5-2v9.5l-2.2-1.2-2.3 1.2z" fill="#ff4f0a"/></svg>
<div class="t" style="left:111.0px;top:29.98px;font-size:14.20px;line-height:14.20px;color:#15141a;font-weight:400;font-family:'Liberation Sans',sans-serif;transform:scaleX(0.8192);transform-origin:0 0;">Flora</div>
<svg class="a" style="left:281.0px;top:31.0px;" width="12" height="12" viewBox="0 0 12 12" fill="none"><path d="M1.5 1.5l9 9M10.5 1.5l-9 9" stroke="#15141a" stroke-width="1.3"/></svg>
<svg class="a" style="left:317.0px;top:30.0px;" width="14" height="14" viewBox="0 0 14 14" fill="none"><path d="M7 0.5v13M0.5 7h13" stroke="#15141a" stroke-width="1.4"/></svg>
<svg class="a" style="left:938.0px;top:32.0px;" width="13" height="8" viewBox="0 0 13 8" fill="none"><path d="M1 1l5.5 5.5L12 1" stroke="#15141a" stroke-width="1.3"/></svg>
<div class="a" style="left:1022.0px;top:36.0px;width:11.0px;height:1.2px;background:#15141a"></div>
<div class="a" style="left:1069.0px;top:32.0px;width:11.0px;height:11.0px;border:1.3px solid #15141a"></div>
<svg class="a" style="left:1114.0px;top:31.0px;" width="13" height="13" viewBox="0 0 13 13" fill="none"><path d="M1 1l11 11M12 1L1 12" stroke="#15141a" stroke-width="1.2"/></svg>
<div class="a" style="left:0.0px;top:59.0px;width:1143.0px;height:39.0px;background:#f9f9fb"></div>
<svg class="a" style="left:10.0px;top:71.0px;" width="18" height="15" viewBox="0 0 18 15" fill="none"><path d="M17 7.5H2M8 1.5l-6 6 6 6" stroke="#3a3a44" stroke-width="1.4"/></svg>
<svg class="a" style="left:46.0px;top:71.0px;" width="18" height="15" viewBox="0 0 18 15" fill="none"><path d="M1 7.5h15M10 1.5l6 6-6 6" stroke="#9a9aa0" stroke-width="1.4"/></svg>
<svg class="a" style="left:82.0px;top:70.0px;" width="17" height="17" viewBox="0 0 17 17" fill="none"><path d="M14.5 8.5A6 6 0 1 1 12.5 4" stroke="#3a3a44" stroke-width="1.4"/><path d="M9.8 1.8h4.8v4.8z" fill="#3a3a44"/></svg>
<div class="a" style="left:189.0px;top:63.0px;width:688.0px;height:32.0px;background:#f0f0f4;border-radius:4px"></div>
<svg class="a" style="left:197.0px;top:70.0px;" width="16" height="18" viewBox="0 0 16 18" fill="none"><path d="M8 1.5L2 4v5c0 4 3 6.5 6 8 3-1.5 6-4 6-8V4z" stroke="#5b5b66" stroke-width="1.4"/></svg>
<svg class="a" style="left:226.0px;top:70.0px;" width="14" height="18" viewBox="0 0 14 18" fill="none"><path d="M3.5 8V5.5a3.5 3.5 0 0 1 7 0V8" stroke="#5b5b66" stroke-width="1.5"/><rect x="1.5" y="8" width="11" height="8.5" rx="1.5" stroke="#5b5b66" stroke-width="1.5"/></svg>
<svg class="a" style="left:253.0px;top:73.0px;" width="16" height="12" viewBox="0 0 16 12" fill="none"><path d="M1 4h7M1 10h14M11 4h4" stroke="#5b5b66" stroke-width="1.4"/><circle cx="9.5" cy="3" r="2" stroke="#5b5b66" stroke-width="1.3"/><circle cx="3" cy="9.5" r="2" fill="#f0f0f4" stroke="#5b5b66" stroke-width="1.3"/></svg>
<div class="t" style="left:280px;top:72px;width:565px;height:18px;overflow:hidden;-webkit-mask-image:linear-gradient(90deg,#000 96%,transparent)">
<div style="position:absolute;left:0;top:-0.20px;font-size:15px;line-height:15px;white-space:nowrap;transform:scaleX(0.9244);transform-origin:0 0"><span style="color:#6e6e73">https://demobam.</span><span style="color:#15141a">decalog.net</span><span style="color:#6e6e73">/formationv45/jsp/system/win_main.jsp?failure=jsp%2Findex.jsp</span></div></div>
<svg class="a" style="left:852.0px;top:71.0px;" width="17" height="17" viewBox="0 0 17 17" fill="none"><path d="M8.5 1.5l2.1 4.6 5 .5-3.8 3.4 1.1 4.9-4.4-2.6-4.4 2.6 1.1-4.9L1.4 6.6l5-.5z" stroke="#15141a" stroke-width="1.3" stroke-linejoin="round"/></svg>
<svg class="a" style="left:967.0px;top:72.0px;" width="16" height="15" viewBox="0 0 16 15" fill="none"><path d="M2.5 1.5h11a1.2 1.2 0 0 1 1.2 1.2V7a6.7 6.7 0 0 1-13.4 0V2.7a1.2 1.2 0 0 1 1.2-1.2z" stroke="#52525e" stroke-width="1.4"/><path d="M5 6.2l3 3 3-3" stroke="#52525e" stroke-width="1.4"/></svg>
<svg class="a" style="left:1002.0px;top:70.0px;" width="17" height="17" viewBox="0 0 17 17" fill="none"><path d="M8.5 1v11M4.3 7.8l4.2 4.2 4.2-4.2M2 11.5v2.8a1 1 0 0 0 1 1h11a1 1 0 0 0 1-1v-2.8" stroke="#52525e" stroke-width="1.4"/></svg>
<svg class="a" style="left:1038.0px;top:70.0px;" width="18" height="18" viewBox="0 0 18 18" fill="none"><circle cx="9" cy="9" r="7.6" stroke="#52525e" stroke-width="1.4"/><circle cx="9" cy="6.8" r="2" fill="#52525e"/><path d="M5.2 11.6h7.6a4 4 0 0 1-7.6 0z" fill="#52525e"/></svg>
<svg class="a" style="left:1075.0px;top:70.0px;" width="17" height="18" viewBox="0 0 17 18" fill="none"><path d="M7.5 4.5V3a2 2 0 0 1 4 0v1.5h2.8v11.7H2V11h1.5a1.8 1.8 0 0 0 0-3.6H2V4.5z" stroke="#52525e" stroke-width="1.4" stroke-linejoin="round"/></svg>
<svg class="a" style="left:1112.0px;top:72.0px;" width="16" height="13" viewBox="0 0 16 13" fill="none"><path d="M1.5 1.5h12.5M1.5 6.5h12.5M1.5 11.5h12.5" stroke="#52525e" stroke-width="1.4"/></svg>
<div class="a" style="left:0.0px;top:98.0px;width:1143.0px;height:29.0px;background:#f9f9fb"></div>
<svg class="a" style="left:8.0px;top:106.0px;" width="16" height="14" viewBox="0 0 16 14" fill="none"><path d="M7 2h7v10H7" stroke="#5b5b66" stroke-width="1.2"/><path d="M1 7h9M7 4l3 3-3 3" stroke="#5b5b66" stroke-width="1.2"/></svg>
<div class="t" style="left:28.0px;top:106.83px;font-size:13.20px;line-height:13.20px;color:#15141a;font-weight:400;font-family:'Liberation Sans',sans-serif;transform:scaleX(0.8989);transform-origin:0 0;">Importer les marque-...</div>
<svg class="a" style="left:168.0px;top:106.0px;" width="15" height="13" viewBox="0 0 15 13" fill="none"><path d="M1 2.5a1 1 0 0 1 1-1h3.5l1.5 2h6a1 1 0 0 1 1 1V11a1 1 0 0 1-1 1H2a1 1 0 0 1-1-1z" stroke="#5b5b66" stroke-width="1.2"/></svg>
<div class="t" style="left:187.0px;top:106.83px;font-size:13.20px;line-height:13.20px;color:#15141a;font-weight:400;font-family:'Liberation Sans',sans-serif;transform:scaleX(0.8927);transform-origin:0 0;">Decalog-Flora</div>
<svg class="a" style="left:274.0px;top:106.0px;" width="15" height="13" viewBox="0 0 15 13" fill="none"><path d="M1 2.5a1 1 0 0 1 1-1h3.5l1.5 2h6a1 1 0 0 1 1 1V11a1 1 0 0 1-1 1H2a1 1 0 0 1-1-1z" stroke="#5b5b66" stroke-width="1.2"/></svg>
<div class="t" style="left:294.0px;top:106.83px;font-size:13.20px;line-height:13.20px;color:#15141a;font-weight:400;font-family:'Liberation Sans',sans-serif;transform:scaleX(0.8255);transform-origin:0 0;">Bases DEMO</div>
<svg class="a" style="left:373.0px;top:106.0px;" width="15" height="13" viewBox="0 0 15 13" fill="none"><path d="M1 2.5a1 1 0 0 1 1-1h3.5l1.5 2h6a1 1 0 0 1 1 1V11a1 1 0 0 1-1 1H2a1 1 0 0 1-1-1z" stroke="#5b5b66" stroke-width="1.2"/></svg>
<div class="t" style="left:392.0px;top:106.83px;font-size:13.20px;line-height:13.20px;color:#15141a;font-weight:400;font-family:'Liberation Sans',sans-serif;transform:scaleX(0.8551);transform-origin:0 0;">Bases Master</div>
<svg class="a" style="left:475.0px;top:106.0px;" width="15" height="13" viewBox="0 0 15 13" fill="none"><path d="M1 2.5a1 1 0 0 1 1-1h3.5l1.5 2h6a1 1 0 0 1 1 1V11a1 1 0 0 1-1 1H2a1 1 0 0 1-1-1z" stroke="#5b5b66" stroke-width="1.2"/></svg>
<div class="t" style="left:494.0px;top:106.83px;font-size:13.20px;line-height:13.20px;color:#15141a;font-weight:400;font-family:'Liberation Sans',sans-serif;transform:scaleX(0.8487);transform-origin:0 0;">Bases clients</div>
<svg class="a" style="left:573.0px;top:106.0px;" width="15" height="13" viewBox="0 0 15 13" fill="none"><path d="M1 2.5a1 1 0 0 1 1-1h3.5l1.5 2h6a1 1 0 0 1 1 1V11a1 1 0 0 1-1 1H2a1 1 0 0 1-1-1z" stroke="#5b5b66" stroke-width="1.2"/></svg>
<div class="t" style="left:592.0px;top:106.83px;font-size:13.20px;line-height:13.20px;color:#15141a;font-weight:400;font-family:'Liberation Sans',sans-serif;transform:scaleX(0.8836);transform-origin:0 0;">Dossier personnel</div>
<svg class="a" style="left:700.0px;top:106.0px;" width="15" height="13" viewBox="0 0 15 13" fill="none"><path d="M1 2.5a1 1 0 0 1 1-1h3.5l1.5 2h6a1 1 0 0 1 1 1V11a1 1 0 0 1-1 1H2a1 1 0 0 1-1-1z" stroke="#5b5b66" stroke-width="1.2"/></svg>
<div class="t" style="left:719.0px;top:106.83px;font-size:13.20px;line-height:13.20px;color:#15141a;font-weight:400;font-family:'Liberation Sans',sans-serif;transform:scaleX(0.8323);transform-origin:0 0;">Ressources</div>
<svg class="a" style="left:1021.0px;top:106.0px;" width="15" height="13" viewBox="0 0 15 13" fill="none"><path d="M1 2.5a1 1 0 0 1 1-1h3.5l1.5 2h6a1 1 0 0 1 1 1V11a1 1 0 0 1-1 1H2a1 1 0 0 1-1-1z" stroke="#5b5b66" stroke-width="1.2"/></svg>
<div class="t" style="left:1040.0px;top:106.83px;font-size:13.20px;line-height:13.20px;color:#15141a;font-weight:400;font-family:'Liberation Sans',sans-serif;transform:scaleX(0.8451);transform-origin:0 0;">SITEM 2024</div>
<svg class="a" style="left:789.0px;top:105.0px;" width="15" height="15" viewBox="0 0 15 15" fill="none"><circle cx="7.5" cy="7.5" r="7" fill="#ff7139"/><circle cx="8" cy="8" r="4.2" fill="#9059ff"/><path d="M1 5q3-5 9-4 4 2 4 6" stroke="#ffbd4f" stroke-width="1.5"/></svg>
<div class="t" style="left:809.0px;top:106.83px;font-size:13.20px;line-height:13.20px;color:#15141a;font-weight:400;font-family:'Liberation Sans',sans-serif;transform:scaleX(0.8897);transform-origin:0 0;">Débuter avec Firefox</div>
<svg class="a" style="left:929.0px;top:104.0px;" width="17" height="17" viewBox="0 0 17 17" fill="none"><circle cx="8.5" cy="8.5" r="2.5" stroke="#5b5b66" stroke-width="1.2"/><path d="M7.2 1.5h2.6l.5 2 1.6.9 2-.6 1.3 2.2-1.5 1.5v1.9l1.5 1.5-1.3 2.2-2-.6-1.6.9-.5 2H7.2l-.5-2-1.6-.9-2 .6L1.8 11l1.5-1.5V7.6L1.8 6.1l1.3-2.2 2 .6 1.6-.9z" stroke="#5b5b66" stroke-width="1.1" stroke-linejoin="round"/></svg>
<div class="t" style="left:950.0px;top:106.83px;font-size:13.20px;line-height:13.20px;color:#15141a;font-weight:400;font-family:'Liberation Sans',sans-serif;transform:scaleX(0.8649);transform-origin:0 0;">Paramètres</div>
<svg class="a" style="left:1117.0px;top:107.0px;" width="14" height="12" viewBox="0 0 14 12" fill="none"><path d="M1 1l5 5-5 5M7 1l5 5-5 5" stroke="#15141a" stroke-width="1.3"/></svg>
<div class="a" style="left:0.0px;top:127.0px;width:1143.0px;height:61.0px;background:#999999"></div>
<div class="a" style="left:8.0px;top:147.0px;width:32.0px;height:4.0px;background:#fff"></div>
<div class="a" style="left:8.0px;top:156.0px;width:32.0px;height:4.0px;background:#fff"></div>
<div class="a" style="left:8.0px;top:165.0px;width:32.0px;height:4.0px;background:#fff"></div>
<div class="t" style="left:66.0px;top:152.03px;font-size:16.50px;line-height:16.50px;color:#fff;font-weight:400;font-family:'Liberation Sans',sans-serif;transform:scaleX(0.9662);transform-origin:0 0;">Administration</div>
<div class="t" style="left:581.0px;top:143.07px;font-size:26.50px;line-height:26.50px;color:#fff;font-weight:700;font-family:'Liberation Sans',sans-serif;transform:scaleX(0.9733);transform-origin:0 0;">Musée Flora Decalog Flora FORMATION v4.5</div>
<div class="a" style="left:211.0px;top:192.0px;width:1.0px;height:811.0px;background:#888"></div>
<div class="t" style="left:41.5px;top:201.46px;font-size:18.00px;line-height:18.00px;color:#000;font-weight:400;font-family:'Liberation Sans',sans-serif;transform:scaleX(0.9839);transform-origin:0 0;-webkit-text-stroke:0.3px #000;">Général</div>
<div class="t" style="left:41.5px;top:233.56px;font-size:18.00px;line-height:18.00px;color:#000;font-weight:400;font-family:'Liberation Sans',sans-serif;transform:scaleX(0.9855);transform-origin:0 0;-webkit-text-stroke:0.3px #000;">Données</div>
<div class="t" style="left:41.5px;top:265.26px;font-size:18.00px;line-height:18.00px;color:#000;font-weight:400;font-family:'Liberation Sans',sans-serif;transform:scaleX(0.9948);transform-origin:0 0;-webkit-text-stroke:0.3px #000;">Paramétrage</div>
<div class="t" style="left:41.5px;top:296.96px;font-size:18.00px;line-height:18.00px;color:#000;font-weight:400;font-family:'Liberation Sans',sans-serif;transform:scaleX(0.9895);transform-origin:0 0;-webkit-text-stroke:0.3px #000;">Accès</div>
<div class="t" style="left:41.5px;top:329.26px;font-size:18.00px;line-height:18.00px;color:#000;font-weight:400;font-family:'Liberation Sans',sans-serif;transform:scaleX(0.9854);transform-origin:0 0;-webkit-text-stroke:0.3px #000;">Système</div>
<div class="t" style="left:41.5px;top:360.76px;font-size:18.00px;line-height:18.00px;color:#000;font-weight:400;font-family:'Liberation Sans',sans-serif;transform:scaleX(0.9894);transform-origin:0 0;-webkit-text-stroke:0.3px #000;">Impressions</div>
<div class="t" style="left:41.5px;top:417.76px;font-size:18.00px;line-height:18.00px;color:#000;font-weight:400;font-family:'Liberation Sans',sans-serif;transform:scaleX(0.9863);transform-origin:0 0;-webkit-text-stroke:0.3px #000;">Utilitaires</div>
<svg class="a" style="left:8.0px;top:199.0px;" width="24" height="26" viewBox="0 0 24 26" fill="none"><path d="M2 11L12 1.5 22 11v12a1.5 1.5 0 0 1-1.5 1.5h-17A1.5 1.5 0 0 1 2 23z" stroke="#426cff" stroke-width="2.4" stroke-linejoin="round"/><path d="M9 24.5V15h6v9.5" stroke="#426cff" stroke-width="2.4"/></svg>
<svg class="a" style="left:7.0px;top:231.0px;" width="26" height="27" viewBox="0 0 26 27" fill="none"><ellipse cx="13" cy="5" rx="11" ry="4" stroke="#426cff" stroke-width="2.4"/><path d="M2 5v17c0 2.2 5 4 11 4s11-1.8 11-4V5M2 10.5c0 2.2 5 4 11 4s11-1.8 11-4M2 16c0 2.2 5 4 11 4s11-1.8 11-4" stroke="#426cff" stroke-width="2.4"/></svg>
<svg class="a" style="left:7.0px;top:263.0px;" width="27" height="27" viewBox="0 0 27 27" fill="none"><path d="M13.97 14.80 L15.73 15.00 L15.73 17.00 L13.97 17.20 L13.22 19.02 L14.32 20.41 L12.91 21.82 L11.52 20.72 L9.70 21.47 L9.50 23.23 L7.50 23.23 L7.30 21.47 L5.48 20.72 L4.09 21.82 L2.68 20.41 L3.78 19.02 L3.03 17.20 L1.27 17.00 L1.27 15.00 L3.03 14.80 L3.78 12.98 L2.68 11.59 L4.09 10.18 L5.48 11.28 L7.30 10.53 L7.50 8.77 L9.50 8.77 L9.70 10.53 L11.52 11.28 L12.91 10.18 L14.32 11.59 L13.22 12.98Z" stroke="#426cff" stroke-width="1.5" stroke-linejoin="round"/><circle cx="8.5" cy="16" r="2.8" stroke="#426cff" stroke-width="1.5"/><path d="M23.41 5.14 L24.75 5.27 L24.75 6.73 L23.41 6.86 L22.87 8.16 L23.73 9.20 L22.70 10.23 L21.66 9.37 L20.36 9.91 L20.23 11.25 L18.77 11.25 L18.64 9.91 L17.34 9.37 L16.30 10.23 L15.27 9.20 L16.13 8.16 L15.59 6.86 L14.25 6.73 L14.25 5.27 L15.59 5.14 L16.13 3.84 L15.27 2.80 L16.30 1.77 L17.34 2.63 L18.64 2.09 L18.77 0.75 L20.23 0.75 L20.36 2.09 L21.66 2.63 L22.70 1.77 L23.73 2.80 L22.87 3.84Z" stroke="#426cff" stroke-width="1.3" stroke-linejoin="round"/><circle cx="19.5" cy="6" r="1.9" stroke="#426cff" stroke-width="1.3"/></svg>
<svg class="a" style="left:9.0px;top:295.0px;" width="22" height="27" viewBox="0 0 22 27" fill="none"><path d="M5.5 11V7a5.5 5.5 0 0 1 11 0v4" stroke="#426cff" stroke-width="2.4"/><rect x="1.5" y="11" width="19" height="14.5" rx="2.5" stroke="#426cff" stroke-width="2.4"/></svg>
<svg class="a" style="left:7.0px;top:327.0px;" width="26" height="26" viewBox="0 0 26 26" fill="none"><path d="M2.5 20.5l9-9M4.5 23.5l-2-2a1.4 1.4 0 0 1 0-2l3-3 4 4-3 3a1.4 1.4 0 0 1-2 0z" stroke="#426cff" stroke-width="1.8"/><path d="M21 2.5l2.5 2.5-3 3-1.5-.5L8 18.5 6.5 17 17.5 6 17 4.5z" stroke="#426cff" stroke-width="1.6" stroke-linejoin="round"/><path d="M12 9L7 4a4.5 4.5 0 0 0-5-1l3 3-1.5 2-3-2.5a4.5 4.5 0 0 0 1 5 4.5 4.5 0 0 0 4 1l5 5M16 14l3 3 2.5 3.5a1.5 1.5 0 0 1-2 2L16 20l-3-3" stroke="#426cff" stroke-width="1.7" stroke-linejoin="round"/></svg>
<svg class="a" style="left:7.0px;top:359.0px;" width="27" height="27" viewBox="0 0 27 27" fill="none"><circle cx="12" cy="12" r="10.5" stroke="#426cff" stroke-width="2.4"/><path d="M6 4.5l1.5 3 3-.5 1 2.5-3 2 -3-1-1.5 3 2.5 3 1 3.5M14.5 2l-.5 3 2.5 1.5 1 3 2.5-1M13 21l1-3 3-1 .5-3 3-1" stroke="#426cff" stroke-width="1.7" stroke-linejoin="round"/><path d="M21 26v-6M18.5 22.5L21 20l2.5 2.5" stroke="#426cff" stroke-width="1.6"/></svg>
<div class="a" style="left:28.0px;top:389.0px;width:183.0px;height:20.0px;background:#b6c7fd;border:1px solid #8fa8fb"></div>
<div class="t" style="left:30.0px;top:392.75px;font-size:14.00px;line-height:14.00px;color:#fff;font-weight:700;font-family:'Liberation Sans',sans-serif;transform:scaleX(0.9885);transform-origin:0 0;">Modèles de publication</div>
<svg class="a" style="left:7.0px;top:417.0px;" width="25" height="25" viewBox="0 0 25 25" fill="none"><path d="M9.5 11L22 23.5a1.5 1.5 0 0 1-2.5 0L7.5 13A6 6 0 0 1 1.5 6.5 5.5 5.5 0 0 1 2.5 3.5L6 7l2.5-.5L9 4 5.5 1A5.5 5.5 0 0 1 9 1a6 6 0 0 1 3 6z" stroke="#426cff" stroke-width="2" stroke-linejoin="round"/></svg>
<svg class="a" style="left:0.0px;top:450.0px;" width="70" height="75" viewBox="0 0 70 75" fill="none"><g transform="translate(0,-450)"><path d="M47.5 462C55 482 56 495 52 503C49 508 43 510 39 511C33 500 31 488 33 480C36 472 42 467 47.5 462Z" fill="#ee8a80"/><path d="M20 484C30 488 38 494 40.5 500C42 506 40 510 38.5 511C28 508 22 498 20 484Z" fill="#7f9ad0" opacity=".72"/><path d="M6 505C14 502 21 499 26 500C32 502 36 507 38.5 511C32 515 26 516 20 515C14 513 10 509 6 505Z" fill="#e63e6d" opacity=".95"/><path d="M33 488C37 492 40 496 40.5 500C42 506 40 510 38.5 511C35 505 33 498 33 488Z" fill="#9a7fa0"/><path d="M24 500C30 502 35 506 38.5 511C32 509 27 505 24 500Z" fill="#96538f"/><circle cx="53.5" cy="515" r="4.3" fill="#2b2d6e"/></g></svg>
<div class="t" style="left:70.0px;top:492.35px;font-size:14.00px;line-height:14.00px;color:#ea776c;font-weight:700;font-family:'Liberation Sans',sans-serif;transform:scaleX(0.9541);transform-origin:0 0;">FLORA</div>
<div class="t" style="left:120.0px;top:492.35px;font-size:14.00px;line-height:14.00px;color:#2d2f6b;font-weight:700;font-family:'Liberation Sans',sans-serif;transform:scaleX(1.0210);transform-origin:0 0;">SOFTWARE</div>
<div class="t" style="left:70.0px;top:510.60px;font-size:8.50px;line-height:8.50px;color:#2d2f6b;font-weight:700;font-family:'Liberation Sans',sans-serif;transform:scaleX(0.9550);transform-origin:0 0;opacity:.9;">Bibliothèques | Archives | Musées</div>
<svg class="a" style="left:511.0px;top:196.0px;" width="17" height="15" viewBox="0 0 17 15" fill="none"><path d="M6 1.5H2.5a1 1 0 0 0-1 1v10a1 1 0 0 0 1 1H6" stroke="#6f6f6f" stroke-width="1.4"/><path d="M5.5 5.5h5V2.5L15.5 7.5l-5 5v-3h-5z" stroke="#6f6f6f" stroke-width="1.4" stroke-linejoin="round"/></svg>
<div class="t" style="left:532.0px;top:197.95px;font-size:14.00px;line-height:14.00px;color:#6f6f6f;font-weight:400;font-family:'Liberation Sans',sans-serif;transform:scaleX(0.9283);transform-origin:0 0;">Quitter</div>
<svg class="a" style="left:597.0px;top:196.0px;" width="15" height="15" viewBox="0 0 15 15" fill="none"><circle cx="7.5" cy="7.5" r="6.5" stroke="#6f6f6f" stroke-width="1.3"/><circle cx="7.5" cy="6" r="2.3" stroke="#6f6f6f" stroke-width="1.3"/><path d="M3.5 12q4-4.5 8 0" stroke="#6f6f6f" stroke-width="1.3"/></svg>
<div class="t" style="left:617.0px;top:197.95px;font-size:14.00px;line-height:14.00px;color:#6f6f6f;font-weight:400;font-family:'Liberation Sans',sans-serif;transform:scaleX(0.9298);transform-origin:0 0;">Musée v4 ADMINISTRATEUR FONCTIONNEL</div>
<svg class="a" style="left:915.0px;top:198.0px;" width="15" height="12" viewBox="0 0 15 12" fill="none"><rect x="1" y="1" width="13" height="10" rx="1" stroke="#6f6f6f" stroke-width="1.3"/><path d="M1.5 2l6 4.5 6-4.5" stroke="#6f6f6f" stroke-width="1.3"/></svg>
<div class="t" style="left:939.0px;top:197.95px;font-size:14.00px;line-height:14.00px;color:#6f6f6f;font-weight:400;font-family:'Liberation Sans',sans-serif;transform:scaleX(0.9327);transform-origin:0 0;">Contact</div>
<div class="t" style="left:1011.0px;top:197.46px;font-size:16.00px;line-height:16.00px;color:#6f6f6f;font-weight:400;font-family:'Liberation Sans',sans-serif;transform:scaleX(1.1239);transform-origin:0 0;">?</div>
<div class="t" style="left:1024.0px;top:197.95px;font-size:14.00px;line-height:14.00px;color:#6f6f6f;font-weight:400;font-family:'Liberation Sans',sans-serif;transform:scaleX(0.9636);transform-origin:0 0;">Aide</div>
<div class="t" style="left:1079.0px;top:197.95px;font-size:14.00px;line-height:14.00px;color:#6f6f6f;font-weight:400;font-family:'Liberation Sans',sans-serif;transform:scaleX(0.9410);transform-origin:0 0;">A propos</div>
<div class="a" style="left:225.0px;top:213.0px;width:918.0px;height:189.0px;background:#f1f1f1"></div>
<svg class="a" style="left:232.0px;top:227.0px;" width="25" height="21" viewBox="0 0 25 21" fill="none"><path d="M23 10.5H3M11 2l-8.5 8.5L11 19" stroke="#426cff" stroke-width="3" stroke-linecap="round" stroke-linejoin="round"/></svg>
<div class="t" style="left:278.0px;top:228.16px;font-size:18.00px;line-height:18.00px;color:#111;font-weight:700;font-family:'Liberation Sans',sans-serif;transform:scaleX(0.9318);transform-origin:0 0;">S_test_DBA</div>
<svg class="a" style="left:392.0px;top:227.0px;" width="18" height="20" viewBox="0 0 18 20" fill="none"><path d="M1 4h16M6 4V2h6v2" stroke="#426cff" stroke-width="1.6"/><path d="M3 4.5l1 14h10l1-14" stroke="#426cff" stroke-width="1.8"/><path d="M7 7.5v8M9 7.5v8M11 7.5v8" stroke="#426cff" stroke-width="1.2"/></svg>
<div class="t" style="left:278.0px;top:264.10px;font-size:15.00px;line-height:15.00px;color:#111;font-weight:400;font-family:'Liberation Sans',sans-serif;transform:scaleX(0.9987);transform-origin:0 0;">Musée - Biens et ensembles</div>
<div class="t" style="left:278.0px;top:292.90px;font-size:15.00px;line-height:15.00px;color:#111;font-weight:400;font-family:'Liberation Sans',sans-serif;transform:scaleX(0.9960);transform-origin:0 0;">mus_bien_complete2</div>
<svg class="a" style="left:431.0px;top:290.0px;" width="20" height="18" viewBox="0 0 20 18" fill="none"><path d="M2.5 8A7.5 7.5 0 0 1 16 5" stroke="#426cff" stroke-width="2.6"/><path d="M17.5 1v6h-6z" fill="#426cff"/><path d="M17.5 10A7.5 7.5 0 0 1 4 13" stroke="#426cff" stroke-width="2.6"/><path d="M2.5 17v-6h6z" fill="#426cff"/></svg>
<div class="a" style="left:278.0px;top:325.0px;width:322.0px;height:54.0px;background:#fff;box-shadow:2px 2px 3px rgba(0,0,0,.35)"></div>
<div class="t" style="left:310.0px;top:346.00px;font-size:15.00px;line-height:15.00px;color:#111;font-weight:400;font-family:'Liberation Sans',sans-serif;transform:scaleX(0.9557);transform-origin:0 0;">S_test_DBA.odt</div>
<svg class="a" style="left:526.0px;top:342.0px;" width="20" height="20" viewBox="0 0 20 20" fill="none"><path d="M10 1v11M5 7.5l5 5 5-5" stroke="#426cff" stroke-width="2.4" stroke-linejoin="round"/><rect x="1" y="13.5" width="18" height="5.5" rx="2" fill="#426cff"/><circle cx="15.5" cy="16.2" r="1" fill="#fff"/></svg>
<svg class="a" style="left:563.0px;top:342.0px;" width="20" height="20" viewBox="0 0 20 20" fill="none"><path d="M14 2l4 4L6.5 17.5 1.5 18.5 2.5 13.5z" fill="#426cff"/><path d="M12 4l4 4" stroke="#fff" stroke-width="1"/></svg>
<div class="a" style="left:927.0px;top:217.0px;width:128.0px;height:181.0px;background:#fff;box-shadow:1px 1px 3px rgba(0,0,0,.3)"></div>
<div class="t" style="left:253.0px;top:429.18px;font-size:15.50px;line-height:15.50px;color:#2e7f6c;font-weight:400;font-family:'Liberation Sans',sans-serif;transform:scaleX(0.9708);transform-origin:0 0;">Regroupements et Champs</div>
<div class="t" style="left:468.0px;top:429.18px;font-size:15.50px;line-height:15.50px;color:#2e7f6c;font-weight:400;font-family:'Liberation Sans',sans-serif;transform:scaleX(0.9882);transform-origin:0 0;">Images du modèle</div>
<div class="t" style="left:625.0px;top:429.18px;font-size:15.50px;line-height:15.50px;color:#2e7f6c;font-weight:400;font-family:'Liberation Sans',sans-serif;transform:scaleX(0.9411);transform-origin:0 0;">Gestion des accès</div>
<svg class="a" style="left:749.0px;top:421.0px;" width="16" height="17" viewBox="0 0 16 17" fill="none"><path d="M4 8V5.5a4 4 0 0 1 8 0V8" stroke="#426cff" stroke-width="2.2"/><rect x="1.5" y="7.5" width="13" height="9" rx="1.5" fill="#426cff"/><circle cx="8" cy="12" r="1.5" fill="#fff"/></svg>
<div class="a" style="left:238.0px;top:455.5px;width:814.0px;height:1.2px;background:#426cff"></div>
<div class="a" style="left:453.0px;top:453.0px;width:156.0px;height:4.0px;background:#426cff"></div>
<div class="a" style="left:238.0px;top:565.0px;width:814.0px;height:1.0px;background:#cfcfdc"></div>
<div class="a" style="left:238.0px;top:634.8px;width:814.0px;height:1.0px;background:#cfcfdc"></div>
<div class="a" style="left:238.0px;top:704.5px;width:814.0px;height:1.0px;background:#cfcfdc"></div>
<div class="a" style="left:238.0px;top:774.8px;width:814.0px;height:1.0px;background:#cfcfdc"></div>
<div class="a" style="left:238.0px;top:845.2px;width:814.0px;height:1.0px;background:#cfcfdc"></div>
<div class="a" style="left:238.0px;top:915.6px;width:814.0px;height:1.0px;background:#cfcfdc"></div>
<div class="a" style="left:238.0px;top:986.0px;width:814.0px;height:1.0px;background:#cfcfdc"></div>
<div class="t" style="left:244.0px;top:524.27px;font-size:13.50px;line-height:13.50px;color:#222;font-weight:400;font-family:'Liberation Sans',sans-serif;transform:scaleX(0.9139);transform-origin:0 0;">Bloc</div>
<div class="a" style="left:281.0px;top:514.5px;width:189.0px;height:31.5px;background:#e8e8f1;border-radius:3px"></div>
<div class="t" style="left:290.0px;top:525.18px;font-size:12.30px;line-height:12.30px;color:#000;font-weight:400;font-family:'Liberation Mono',monospace;transform:scaleX(0.9212);transform-origin:0 0;-webkit-text-stroke:0.25px #000;">Image_consultation_ou_doc</div>
<svg class="a" style="left:488.0px;top:523.5px;" width="9" height="15" viewBox="0 0 9 15" fill="none"><path d="M2 2l5.5 5.5L2 13" stroke="#111" stroke-width="1.8"/></svg>
<div class="t" style="left:503.0px;top:515.97px;font-size:13.50px;line-height:13.50px;color:#222;font-weight:400;font-family:'Liberation Sans',sans-serif;transform:scaleX(0.9300);transform-origin:0 0;">fichier</div>
<div class="t" style="left:503.0px;top:532.57px;font-size:13.50px;line-height:13.50px;color:#222;font-weight:400;font-family:'Liberation Sans',sans-serif;transform:scaleX(0.9300);transform-origin:0 0;">original</div>
<div class="t" style="left:577.8px;top:524.57px;font-size:13.50px;line-height:13.50px;color:#111;font-weight:700;font-family:'Liberation Sans',sans-serif;transform:scaleX(0.8600);transform-origin:0 0;">Encadrer</div>
<svg class="a" style="left:718.0px;top:528.0px;" width="10" height="6" viewBox="0 0 10 6" fill="none"><path d="M0 0h10L5 5.5z" fill="#111"/></svg>
<div class="a" style="left:758.0px;top:510.0px;width:84.0px;height:40.0px;background:#fff;border-radius:2px;box-shadow:0 0 2px rgba(0,0,0,.28)"></div>
<div class="t" style="left:808.4px;top:524.26px;font-size:13.50px;line-height:13.50px;color:#111;font-weight:400;font-family:'Liberation Mono',monospace;transform:scaleX(0.9300);transform-origin:0 0;">200</div>
<div class="t" style="left:856.0px;top:524.57px;font-size:13.50px;line-height:13.50px;color:#333;font-weight:400;font-family:'Liberation Sans',sans-serif;transform:scaleX(0.9820);transform-origin:0 0;">px</div>
<div class="a" style="left:883.0px;top:510.0px;width:85.0px;height:40.0px;background:#fff;border-radius:2px;box-shadow:0 0 2px rgba(0,0,0,.28)"></div>
<div class="t" style="left:934.4px;top:524.26px;font-size:13.50px;line-height:13.50px;color:#111;font-weight:400;font-family:'Liberation Mono',monospace;transform:scaleX(0.9300);transform-origin:0 0;">200</div>
<div class="t" style="left:982.0px;top:524.57px;font-size:13.50px;line-height:13.50px;color:#333;font-weight:400;font-family:'Liberation Sans',sans-serif;transform:scaleX(0.9820);transform-origin:0 0;">px</div>
<div class="a" style="left:1003.0px;top:512.0px;width:78.0px;height:38.0px;background:#426cff;border-radius:2px"></div>
<svg class="a" style="left:1013.0px;top:524.0px;" width="11" height="14" viewBox="0 0 11 14" fill="none"><path d="M3.5 0.8h3.5a1 1 0 0 1 1 1v0.7h1.2a1 1 0 0 1 1 1v9.2a1 1 0 0 1-1 1H1.3a1 1 0 0 1-1-1V3.5a1 1 0 0 1 1-1h1.2V1.8a1 1 0 0 1 1-1z" fill="#fff"/><path d="M4 3.6h3" stroke="#426cff" stroke-width="0.9"/></svg>
<div class="t" style="left:1032.0px;top:524.57px;font-size:13.50px;line-height:13.50px;color:#fff;font-weight:400;font-family:'Liberation Sans',sans-serif;transform:scaleX(0.9556);transform-origin:0 0;">Copier</div>
<div class="t" style="left:244.0px;top:594.27px;font-size:13.50px;line-height:13.50px;color:#222;font-weight:400;font-family:'Liberation Sans',sans-serif;transform:scaleX(0.9139);transform-origin:0 0;">Bloc</div>
<div class="a" style="left:281.0px;top:584.5px;width:189.0px;height:31.5px;background:#e8e8f1;border-radius:3px"></div>
<div class="t" style="left:290.0px;top:595.18px;font-size:12.30px;line-height:12.30px;color:#000;font-weight:400;font-family:'Liberation Mono',monospace;transform:scaleX(0.9212);transform-origin:0 0;-webkit-text-stroke:0.25px #000;">Image_consultation_ou_doc</div>
<svg class="a" style="left:488.0px;top:593.5px;" width="9" height="15" viewBox="0 0 9 15" fill="none"><path d="M2 2l5.5 5.5L2 13" stroke="#111" stroke-width="1.8"/></svg>
<div class="t" style="left:503.0px;top:577.97px;font-size:13.50px;line-height:13.50px;color:#222;font-weight:400;font-family:'Liberation Sans',sans-serif;transform:scaleX(0.9300);transform-origin:0 0;">imagette</div>
<div class="t" style="left:503.0px;top:594.57px;font-size:13.50px;line-height:13.50px;color:#222;font-weight:400;font-family:'Liberation Sans',sans-serif;transform:scaleX(0.9300);transform-origin:0 0;">-</div>
<div class="t" style="left:503.0px;top:610.97px;font-size:13.50px;line-height:13.50px;color:#222;font-weight:400;font-family:'Liberation Sans',sans-serif;transform:scaleX(0.9300);transform-origin:0 0;">192x192</div>
<div class="t" style="left:585.6px;top:594.57px;font-size:13.50px;line-height:13.50px;color:#111;font-weight:700;font-family:'Liberation Sans',sans-serif;transform:scaleX(0.8600);transform-origin:0 0;">Encadrer</div>
<svg class="a" style="left:725.0px;top:598.0px;" width="10" height="6" viewBox="0 0 10 6" fill="none"><path d="M0 0h10L5 5.5z" fill="#111"/></svg>
<div class="a" style="left:765.0px;top:580.0px;width:85.0px;height:40.0px;background:#fff;border-radius:2px;box-shadow:0 0 2px rgba(0,0,0,.28)"></div>
<div class="t" style="left:816.4px;top:594.26px;font-size:13.50px;line-height:13.50px;color:#111;font-weight:400;font-family:'Liberation Mono',monospace;transform:scaleX(0.9300);transform-origin:0 0;">200</div>
<div class="t" style="left:864.0px;top:594.57px;font-size:13.50px;line-height:13.50px;color:#333;font-weight:400;font-family:'Liberation Sans',sans-serif;transform:scaleX(0.9820);transform-origin:0 0;">px</div>
<div class="a" style="left:891.0px;top:580.0px;width:85.0px;height:40.0px;background:#fff;border-radius:2px;box-shadow:0 0 2px rgba(0,0,0,.28)"></div>
<div class="t" style="left:942.4px;top:594.26px;font-size:13.50px;line-height:13.50px;color:#111;font-weight:400;font-family:'Liberation Mono',monospace;transform:scaleX(0.9300);transform-origin:0 0;">200</div>
<div class="t" style="left:990.0px;top:594.57px;font-size:13.50px;line-height:13.50px;color:#333;font-weight:400;font-family:'Liberation Sans',sans-serif;transform:scaleX(0.9820);transform-origin:0 0;">px</div>
<div class="a" style="left:1010.0px;top:582.0px;width:79.0px;height:38.0px;background:#426cff;border-radius:2px"></div>
<svg class="a" style="left:1020.0px;top:594.0px;" width="11" height="14" viewBox="0 0 11 14" fill="none"><path d="M3.5 0.8h3.5a1 1 0 0 1 1 1v0.7h1.2a1 1 0 0 1 1 1v9.2a1 1 0 0 1-1 1H1.3a1 1 0 0 1-1-1V3.5a1 1 0 0 1 1-1h1.2V1.8a1 1 0 0 1 1-1z" fill="#fff"/><path d="M4 3.6h3" stroke="#426cff" stroke-width="0.9"/></svg>
<div class="t" style="left:1039.0px;top:594.57px;font-size:13.50px;line-height:13.50px;color:#fff;font-weight:400;font-family:'Liberation Sans',sans-serif;transform:scaleX(0.9556);transform-origin:0 0;">Copier</div>
<div class="t" style="left:244.0px;top:664.27px;font-size:13.50px;line-height:13.50px;color:#222;font-weight:400;font-family:'Liberation Sans',sans-serif;transform:scaleX(0.9139);transform-origin:0 0;">Bloc</div>
<div class="a" style="left:281.0px;top:654.5px;width:189.0px;height:31.5px;background:#e8e8f1;border-radius:3px"></div>
<div class="t" style="left:290.0px;top:665.18px;font-size:12.30px;line-height:12.30px;color:#000;font-weight:400;font-family:'Liberation Mono',monospace;transform:scaleX(0.9212);transform-origin:0 0;-webkit-text-stroke:0.25px #000;">Image_consultation_ou_doc</div>
<svg class="a" style="left:488.0px;top:663.5px;" width="9" height="15" viewBox="0 0 9 15" fill="none"><path d="M2 2l5.5 5.5L2 13" stroke="#111" stroke-width="1.8"/></svg>
<div class="t" style="left:503.0px;top:647.97px;font-size:13.50px;line-height:13.50px;color:#222;font-weight:400;font-family:'Liberation Sans',sans-serif;transform:scaleX(0.9300);transform-origin:0 0;">medium</div>
<div class="t" style="left:503.0px;top:664.57px;font-size:13.50px;line-height:13.50px;color:#222;font-weight:400;font-family:'Liberation Sans',sans-serif;transform:scaleX(0.9300);transform-origin:0 0;">-</div>
<div class="t" style="left:503.0px;top:680.97px;font-size:13.50px;line-height:13.50px;color:#222;font-weight:400;font-family:'Liberation Sans',sans-serif;transform:scaleX(0.9300);transform-origin:0 0;">800x600</div>
<div class="t" style="left:582.6px;top:664.57px;font-size:13.50px;line-height:13.50px;color:#111;font-weight:700;font-family:'Liberation Sans',sans-serif;transform:scaleX(0.8600);transform-origin:0 0;">Adapter</div>
<svg class="a" style="left:722.0px;top:668.0px;" width="10" height="6" viewBox="0 0 10 6" fill="none"><path d="M0 0h10L5 5.5z" fill="#111"/></svg>
<div class="a" style="left:757.5px;top:650.0px;width:84.5px;height:40.0px;background:#fff;border-radius:2px;box-shadow:0 0 2px rgba(0,0,0,.28)"></div>
<div class="t" style="left:808.4px;top:664.26px;font-size:13.50px;line-height:13.50px;color:#111;font-weight:400;font-family:'Liberation Mono',monospace;transform:scaleX(0.9300);transform-origin:0 0;">300</div>
<div class="t" style="left:856.0px;top:664.57px;font-size:13.50px;line-height:13.50px;color:#333;font-weight:400;font-family:'Liberation Sans',sans-serif;transform:scaleX(0.9388);transform-origin:0 0;">px en</div>
<div class="a" style="left:1015.0px;top:652.0px;width:78.0px;height:38.0px;background:#426cff;border-radius:2px"></div>
<svg class="a" style="left:1025.0px;top:664.0px;" width="11" height="14" viewBox="0 0 11 14" fill="none"><path d="M3.5 0.8h3.5a1 1 0 0 1 1 1v0.7h1.2a1 1 0 0 1 1 1v9.2a1 1 0 0 1-1 1H1.3a1 1 0 0 1-1-1V3.5a1 1 0 0 1 1-1h1.2V1.8a1 1 0 0 1 1-1z" fill="#fff"/><path d="M4 3.6h3" stroke="#426cff" stroke-width="0.9"/></svg>
<div class="t" style="left:1044.0px;top:664.57px;font-size:13.50px;line-height:13.50px;color:#fff;font-weight:400;font-family:'Liberation Sans',sans-serif;transform:scaleX(0.9556);transform-origin:0 0;">Copier</div>
<div class="a" style="left:899.0px;top:653.0px;width:89.0px;height:35.0px;background:#fff;border:1px solid #8a8a8a;border-radius:3px"></div>
<div class="t" style="left:908.0px;top:664.57px;font-size:13.50px;line-height:13.50px;color:#444;font-weight:400;font-family:'Liberation Sans',sans-serif;transform:scaleX(0.9787);transform-origin:0 0;">Hauteur</div>
<svg class="a" style="left:962.0px;top:668.0px;" width="11" height="6" viewBox="0 0 11 6" fill="none"><path d="M0 0h11L5.5 5.5z" fill="#666"/></svg>
<div class="a" style="left:994.0px;top:646.0px;width:116.0px;height:49.0px;border:2.4px solid #f01e1e;border-radius:7px;box-shadow:1px 1px 4px rgba(0,0,0,.25),inset 0 0 5px rgba(0,0,0,.14)"></div>
<div class="t" style="left:251.5px;top:734.27px;font-size:13.50px;line-height:13.50px;color:#222;font-weight:400;font-family:'Liberation Sans',sans-serif;transform:scaleX(0.8948);transform-origin:0 0;">Bloc</div>
<div class="a" style="left:288.0px;top:724.5px;width:113.0px;height:31.5px;background:#e8e8f1;border-radius:3px"></div>
<div class="t" style="left:296.0px;top:735.18px;font-size:12.30px;line-height:12.30px;color:#000;font-weight:400;font-family:'Liberation Mono',monospace;transform:scaleX(0.9289);transform-origin:0 0;-webkit-text-stroke:0.25px #000;">Premiere_image</div>
<svg class="a" style="left:418.0px;top:733.5px;" width="9" height="15" viewBox="0 0 9 15" fill="none"><path d="M2 2l5.5 5.5L2 13" stroke="#111" stroke-width="1.8"/></svg>
<div class="t" style="left:434.0px;top:725.97px;font-size:13.50px;line-height:13.50px;color:#222;font-weight:400;font-family:'Liberation Sans',sans-serif;transform:scaleX(0.9300);transform-origin:0 0;">fichier</div>
<div class="t" style="left:434.0px;top:742.57px;font-size:13.50px;line-height:13.50px;color:#222;font-weight:400;font-family:'Liberation Sans',sans-serif;transform:scaleX(0.9300);transform-origin:0 0;">original</div>
<div class="t" style="left:532.0px;top:734.57px;font-size:13.50px;line-height:13.50px;color:#111;font-weight:700;font-family:'Liberation Sans',sans-serif;transform:scaleX(0.8600);transform-origin:0 0;">Encadrer</div>
<svg class="a" style="left:672.0px;top:738.0px;" width="10" height="6" viewBox="0 0 10 6" fill="none"><path d="M0 0h10L5 5.5z" fill="#111"/></svg>
<div class="a" style="left:712.0px;top:721.0px;width:85.0px;height:40.0px;background:#fff;border-radius:2px;box-shadow:0 0 2px rgba(0,0,0,.28)"></div>
<div class="t" style="left:763.4px;top:735.26px;font-size:13.50px;line-height:13.50px;color:#111;font-weight:400;font-family:'Liberation Mono',monospace;transform:scaleX(0.9300);transform-origin:0 0;">200</div>
<div class="t" style="left:811.0px;top:734.57px;font-size:13.50px;line-height:13.50px;color:#333;font-weight:400;font-family:'Liberation Sans',sans-serif;transform:scaleX(1.0521);transform-origin:0 0;">px</div>
<div class="a" style="left:838.0px;top:721.0px;width:85.0px;height:40.0px;background:#fff;border-radius:2px;box-shadow:0 0 2px rgba(0,0,0,.28)"></div>
<div class="t" style="left:889.4px;top:735.26px;font-size:13.50px;line-height:13.50px;color:#111;font-weight:400;font-family:'Liberation Mono',monospace;transform:scaleX(0.9300);transform-origin:0 0;">200</div>
<div class="t" style="left:937.0px;top:734.57px;font-size:13.50px;line-height:13.50px;color:#333;font-weight:400;font-family:'Liberation Sans',sans-serif;transform:scaleX(1.0521);transform-origin:0 0;">px</div>
<div class="a" style="left:966.0px;top:722.0px;width:78.0px;height:38.0px;background:#426cff;border-radius:2px"></div>
<svg class="a" style="left:976.0px;top:734.0px;" width="11" height="14" viewBox="0 0 11 14" fill="none"><path d="M3.5 0.8h3.5a1 1 0 0 1 1 1v0.7h1.2a1 1 0 0 1 1 1v9.2a1 1 0 0 1-1 1H1.3a1 1 0 0 1-1-1V3.5a1 1 0 0 1 1-1h1.2V1.8a1 1 0 0 1 1-1z" fill="#fff"/><path d="M4 3.6h3" stroke="#426cff" stroke-width="0.9"/></svg>
<div class="t" style="left:995.0px;top:734.57px;font-size:13.50px;line-height:13.50px;color:#fff;font-weight:400;font-family:'Liberation Sans',sans-serif;transform:scaleX(0.9556);transform-origin:0 0;">Copier</div>
<div class="t" style="left:251.5px;top:804.77px;font-size:13.50px;line-height:13.50px;color:#222;font-weight:400;font-family:'Liberation Sans',sans-serif;transform:scaleX(0.8948);transform-origin:0 0;">Bloc</div>
<div class="a" style="left:288.0px;top:795.0px;width:113.0px;height:31.5px;background:#e8e8f1;border-radius:3px"></div>
<div class="t" style="left:296.0px;top:805.68px;font-size:12.30px;line-height:12.30px;color:#000;font-weight:400;font-family:'Liberation Mono',monospace;transform:scaleX(0.9289);transform-origin:0 0;-webkit-text-stroke:0.25px #000;">Premiere_image</div>
<svg class="a" style="left:418.0px;top:804.0px;" width="9" height="15" viewBox="0 0 9 15" fill="none"><path d="M2 2l5.5 5.5L2 13" stroke="#111" stroke-width="1.8"/></svg>
<div class="t" style="left:434.0px;top:796.47px;font-size:13.50px;line-height:13.50px;color:#222;font-weight:400;font-family:'Liberation Sans',sans-serif;transform:scaleX(0.9300);transform-origin:0 0;">imagette -</div>
<div class="t" style="left:434.0px;top:813.07px;font-size:13.50px;line-height:13.50px;color:#222;font-weight:400;font-family:'Liberation Sans',sans-serif;transform:scaleX(0.9300);transform-origin:0 0;">192x192</div>
<div class="t" style="left:532.0px;top:805.07px;font-size:13.50px;line-height:13.50px;color:#111;font-weight:700;font-family:'Liberation Sans',sans-serif;transform:scaleX(0.8600);transform-origin:0 0;">Encadrer</div>
<svg class="a" style="left:672.0px;top:808.5px;" width="10" height="6" viewBox="0 0 10 6" fill="none"><path d="M0 0h10L5 5.5z" fill="#111"/></svg>
<div class="a" style="left:712.0px;top:791.5px;width:85.0px;height:40.0px;background:#fff;border-radius:2px;box-shadow:0 0 2px rgba(0,0,0,.28)"></div>
<div class="t" style="left:763.4px;top:805.76px;font-size:13.50px;line-height:13.50px;color:#111;font-weight:400;font-family:'Liberation Mono',monospace;transform:scaleX(0.9300);transform-origin:0 0;">200</div>
<div class="t" style="left:811.0px;top:805.07px;font-size:13.50px;line-height:13.50px;color:#333;font-weight:400;font-family:'Liberation Sans',sans-serif;transform:scaleX(1.0521);transform-origin:0 0;">px</div>
<div class="a" style="left:838.0px;top:791.5px;width:85.0px;height:40.0px;background:#fff;border-radius:2px;box-shadow:0 0 2px rgba(0,0,0,.28)"></div>
<div class="t" style="left:889.4px;top:805.76px;font-size:13.50px;line-height:13.50px;color:#111;font-weight:400;font-family:'Liberation Mono',monospace;transform:scaleX(0.9300);transform-origin:0 0;">200</div>
<div class="t" style="left:937.0px;top:805.07px;font-size:13.50px;line-height:13.50px;color:#333;font-weight:400;font-family:'Liberation Sans',sans-serif;transform:scaleX(1.0521);transform-origin:0 0;">px</div>
<div class="a" style="left:966.0px;top:792.5px;width:78.0px;height:38.0px;background:#426cff;border-radius:2px"></div>
<svg class="a" style="left:976.0px;top:804.5px;" width="11" height="14" viewBox="0 0 11 14" fill="none"><path d="M3.5 0.8h3.5a1 1 0 0 1 1 1v0.7h1.2a1 1 0 0 1 1 1v9.2a1 1 0 0 1-1 1H1.3a1 1 0 0 1-1-1V3.5a1 1 0 0 1 1-1h1.2V1.8a1 1 0 0 1 1-1z" fill="#fff"/><path d="M4 3.6h3" stroke="#426cff" stroke-width="0.9"/></svg>
<div class="t" style="left:995.0px;top:805.07px;font-size:13.50px;line-height:13.50px;color:#fff;font-weight:400;font-family:'Liberation Sans',sans-serif;transform:scaleX(0.9556);transform-origin:0 0;">Copier</div>
<div class="t" style="left:251.5px;top:875.27px;font-size:13.50px;line-height:13.50px;color:#222;font-weight:400;font-family:'Liberation Sans',sans-serif;transform:scaleX(0.8948);transform-origin:0 0;">Bloc</div>
<div class="a" style="left:288.0px;top:865.5px;width:113.0px;height:31.5px;background:#e8e8f1;border-radius:3px"></div>
<div class="t" style="left:296.0px;top:876.18px;font-size:12.30px;line-height:12.30px;color:#000;font-weight:400;font-family:'Liberation Mono',monospace;transform:scaleX(0.9289);transform-origin:0 0;-webkit-text-stroke:0.25px #000;">Premiere_image</div>
<svg class="a" style="left:418.0px;top:874.5px;" width="9" height="15" viewBox="0 0 9 15" fill="none"><path d="M2 2l5.5 5.5L2 13" stroke="#111" stroke-width="1.8"/></svg>
<div class="t" style="left:434.0px;top:866.97px;font-size:13.50px;line-height:13.50px;color:#222;font-weight:400;font-family:'Liberation Sans',sans-serif;transform:scaleX(0.9300);transform-origin:0 0;">medium -</div>
<div class="t" style="left:434.0px;top:883.57px;font-size:13.50px;line-height:13.50px;color:#222;font-weight:400;font-family:'Liberation Sans',sans-serif;transform:scaleX(0.9300);transform-origin:0 0;">800x600</div>
<div class="t" style="left:532.0px;top:875.57px;font-size:13.50px;line-height:13.50px;color:#111;font-weight:700;font-family:'Liberation Sans',sans-serif;transform:scaleX(0.8600);transform-origin:0 0;">Encadrer</div>
<svg class="a" style="left:672.0px;top:879.0px;" width="10" height="6" viewBox="0 0 10 6" fill="none"><path d="M0 0h10L5 5.5z" fill="#111"/></svg>
<div class="a" style="left:712.0px;top:862.0px;width:85.0px;height:40.0px;background:#fff;border-radius:2px;box-shadow:0 0 2px rgba(0,0,0,.28)"></div>
<div class="t" style="left:763.4px;top:876.26px;font-size:13.50px;line-height:13.50px;color:#111;font-weight:400;font-family:'Liberation Mono',monospace;transform:scaleX(0.9300);transform-origin:0 0;">200</div>
<div class="t" style="left:811.0px;top:875.57px;font-size:13.50px;line-height:13.50px;color:#333;font-weight:400;font-family:'Liberation Sans',sans-serif;transform:scaleX(1.0521);transform-origin:0 0;">px</div>
<div class="a" style="left:838.0px;top:862.0px;width:85.0px;height:40.0px;background:#fff;border-radius:2px;box-shadow:0 0 2px rgba(0,0,0,.28)"></div>
<div class="t" style="left:889.4px;top:876.26px;font-size:13.50px;line-height:13.50px;color:#111;font-weight:400;font-family:'Liberation Mono',monospace;transform:scaleX(0.9300);transform-origin:0 0;">200</div>
<div class="t" style="left:937.0px;top:875.57px;font-size:13.50px;line-height:13.50px;color:#333;font-weight:400;font-family:'Liberation Sans',sans-serif;transform:scaleX(1.0521);transform-origin:0 0;">px</div>
<div class="a" style="left:966.0px;top:863.0px;width:78.0px;height:38.0px;background:#426cff;border-radius:2px"></div>
<svg class="a" style="left:976.0px;top:875.0px;" width="11" height="14" viewBox="0 0 11 14" fill="none"><path d="M3.5 0.8h3.5a1 1 0 0 1 1 1v0.7h1.2a1 1 0 0 1 1 1v9.2a1 1 0 0 1-1 1H1.3a1 1 0 0 1-1-1V3.5a1 1 0 0 1 1-1h1.2V1.8a1 1 0 0 1 1-1z" fill="#fff"/><path d="M4 3.6h3" stroke="#426cff" stroke-width="0.9"/></svg>
<div class="t" style="left:995.0px;top:875.57px;font-size:13.50px;line-height:13.50px;color:#fff;font-weight:400;font-family:'Liberation Sans',sans-serif;transform:scaleX(0.9556);transform-origin:0 0;">Copier</div>
<div class="t" style="left:251.5px;top:945.27px;font-size:13.50px;line-height:13.50px;color:#222;font-weight:400;font-family:'Liberation Sans',sans-serif;transform:scaleX(0.8948);transform-origin:0 0;">Bloc</div>
<div class="a" style="left:288.0px;top:935.5px;width:106.0px;height:31.5px;background:#e8e8f1;border-radius:3px"></div>
<div class="t" style="left:296.0px;top:946.18px;font-size:12.30px;line-height:12.30px;color:#000;font-weight:400;font-family:'Liberation Mono',monospace;transform:scaleX(0.9274);transform-origin:0 0;-webkit-text-stroke:0.25px #000;">Toutes_images</div>
<svg class="a" style="left:412.0px;top:944.5px;" width="9" height="15" viewBox="0 0 9 15" fill="none"><path d="M2 2l5.5 5.5L2 13" stroke="#111" stroke-width="1.8"/></svg>
<div class="t" style="left:430.0px;top:936.97px;font-size:13.50px;line-height:13.50px;color:#222;font-weight:400;font-family:'Liberation Sans',sans-serif;transform:scaleX(0.9300);transform-origin:0 0;">fichier</div>
<div class="t" style="left:430.0px;top:953.57px;font-size:13.50px;line-height:13.50px;color:#222;font-weight:400;font-family:'Liberation Sans',sans-serif;transform:scaleX(0.9300);transform-origin:0 0;">original</div>
<div class="t" style="left:532.0px;top:945.57px;font-size:13.50px;line-height:13.50px;color:#111;font-weight:700;font-family:'Liberation Sans',sans-serif;transform:scaleX(0.8600);transform-origin:0 0;">Encadrer</div>
<svg class="a" style="left:672.0px;top:949.0px;" width="10" height="6" viewBox="0 0 10 6" fill="none"><path d="M0 0h10L5 5.5z" fill="#111"/></svg>
<div class="a" style="left:712.0px;top:932.0px;width:85.0px;height:40.0px;background:#fff;border-radius:2px;box-shadow:0 0 2px rgba(0,0,0,.28)"></div>
<div class="t" style="left:763.4px;top:946.26px;font-size:13.50px;line-height:13.50px;color:#111;font-weight:400;font-family:'Liberation Mono',monospace;transform:scaleX(0.9300);transform-origin:0 0;">200</div>
<div class="t" style="left:811.0px;top:945.57px;font-size:13.50px;line-height:13.50px;color:#333;font-weight:400;font-family:'Liberation Sans',sans-serif;transform:scaleX(1.0521);transform-origin:0 0;">px</div>
<div class="a" style="left:838.0px;top:932.0px;width:85.0px;height:40.0px;background:#fff;border-radius:2px;box-shadow:0 0 2px rgba(0,0,0,.28)"></div>
<div class="t" style="left:889.4px;top:946.26px;font-size:13.50px;line-height:13.50px;color:#111;font-weight:400;font-family:'Liberation Mono',monospace;transform:scaleX(0.9300);transform-origin:0 0;">200</div>
<div class="t" style="left:937.0px;top:945.57px;font-size:13.50px;line-height:13.50px;color:#333;font-weight:400;font-family:'Liberation Sans',sans-serif;transform:scaleX(1.0521);transform-origin:0 0;">px</div>
<div class="a" style="left:966.0px;top:933.0px;width:78.0px;height:38.0px;background:#426cff;border-radius:2px"></div>
<svg class="a" style="left:976.0px;top:945.0px;" width="11" height="14" viewBox="0 0 11 14" fill="none"><path d="M3.5 0.8h3.5a1 1 0 0 1 1 1v0.7h1.2a1 1 0 0 1 1 1v9.2a1 1 0 0 1-1 1H1.3a1 1 0 0 1-1-1V3.5a1 1 0 0 1 1-1h1.2V1.8a1 1 0 0 1 1-1z" fill="#fff"/><path d="M4 3.6h3" stroke="#426cff" stroke-width="0.9"/></svg>
<div class="t" style="left:995.0px;top:945.57px;font-size:13.50px;line-height:13.50px;color:#fff;font-weight:400;font-family:'Liberation Sans',sans-serif;transform:scaleX(0.9556);transform-origin:0 0;">Copier</div>
</div></div>
<div class="a" style="left:0.0px;top:1003.0px;width:1050.0px;height:9.0px;background:linear-gradient(#a9a9a9,#bdbdbd 30%,#c3c3c3)"></div>
<svg class="a" style="left:0.0px;top:0.0px;filter:drop-shadow(1.5px 1.5px 1.5px rgba(0,0,0,.35))" width="1915" height="1012" viewBox="0 0 1915 1012" fill="none"><path d="M1116 666.5L1238 502L1233 499.5L1258.5 485.5L1252 513.5L1246.5 508.5L1117.5 667.5Z" fill="#f00"/></svg>
</body></html>
